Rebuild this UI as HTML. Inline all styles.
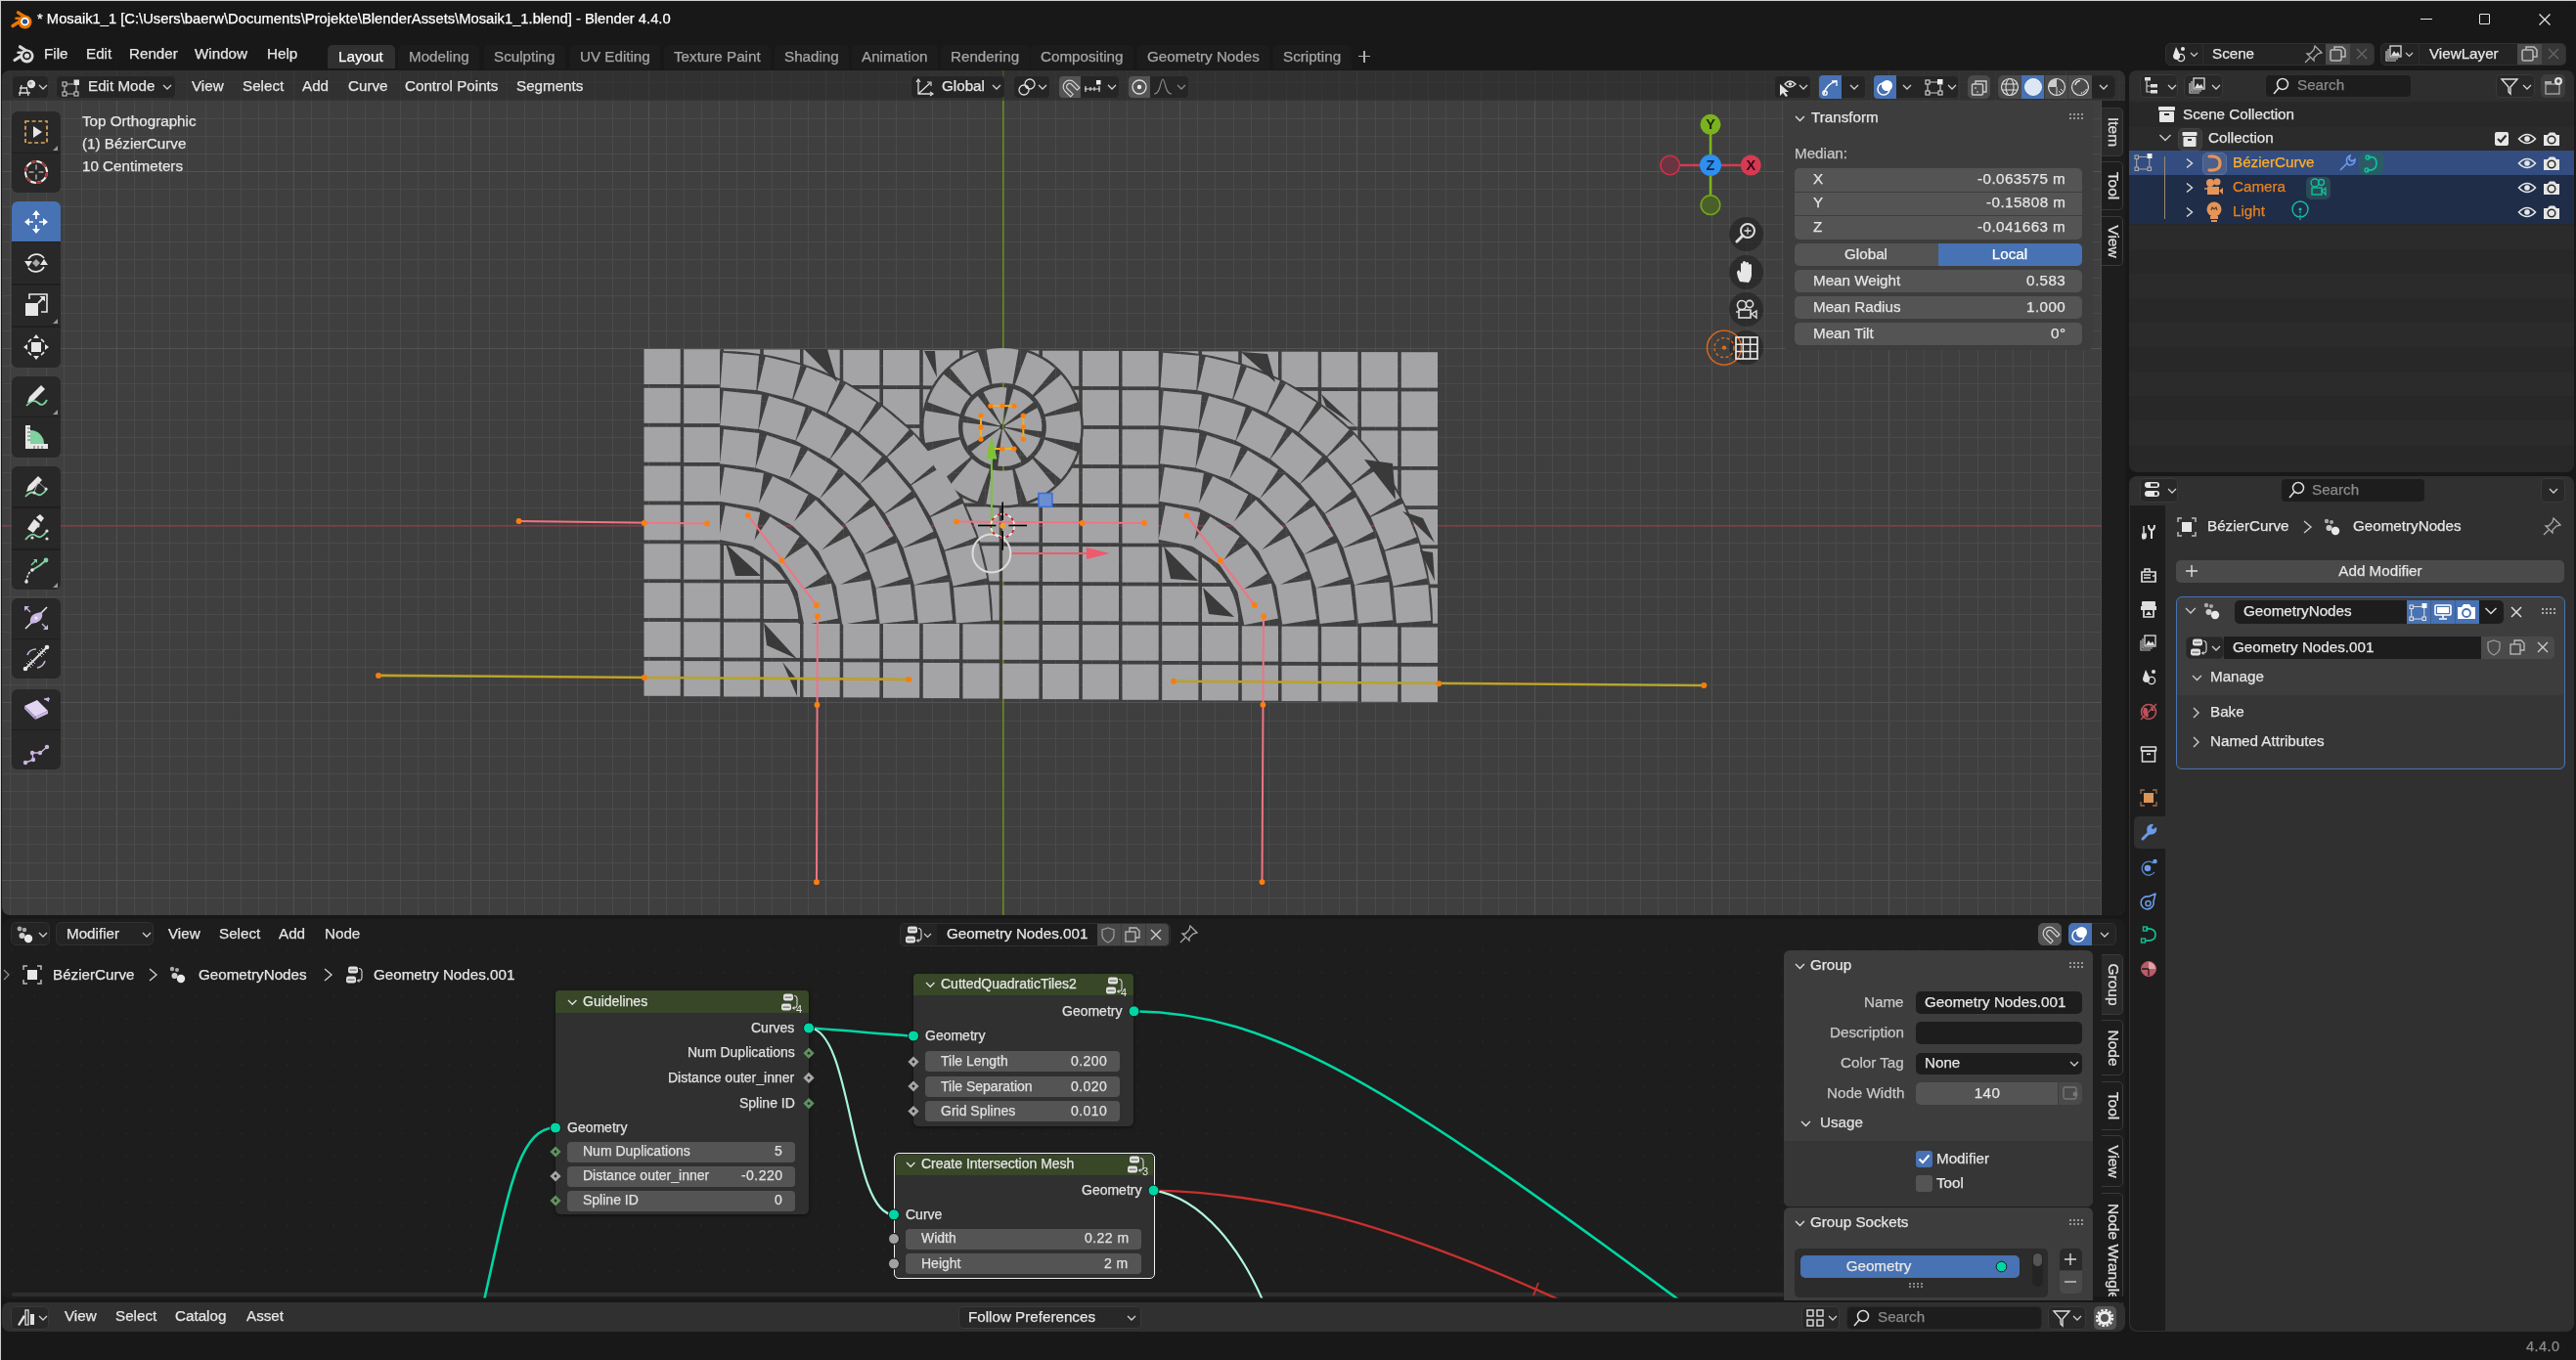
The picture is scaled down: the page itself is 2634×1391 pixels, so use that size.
<!DOCTYPE html><html><head><meta charset="utf-8"><style>
html,body{margin:0;padding:0}
body{width:2634px;height:1391px;overflow:hidden;position:relative;background:#181818;font-family:"Liberation Sans",sans-serif}
.a{position:absolute}
.t{position:absolute;white-space:nowrap;line-height:22px;height:22px;will-change:transform;-webkit-text-stroke:0.25px currentColor}
svg{overflow:visible}
</style></head><body>
<div class="a" style="left:0px;top:0px;width:2634px;height:1px;background:#cfcfcf;"></div>
<div class="a" style="left:0px;top:0px;width:1px;height:1391px;background:#cfcfcf;"></div>
<div class="a" style="left:1px;top:1px;width:2633px;height:1390px;background:#181818;border-radius:8px 8px 8px 8px;"></div>
<svg class="a" style="left:10px;top:10px;" width="24" height="20" viewBox="0 0 24 20"><g stroke="#ea7600" stroke-linecap="round" fill="none"><path d="M15 7 L8.5 2.8" stroke-width="3.3"/><path d="M10 12 L3 16.5" stroke-width="3.3"/><path d="M11 8.8 L6.5 8.8" stroke-width="2.6"/></g><circle cx="15.5" cy="12.5" r="7" fill="#ea7600"/><circle cx="15.5" cy="12" r="4.3" fill="#fff"/><circle cx="15.5" cy="12" r="2.6" fill="#265787"/></svg>
<div class="t" style="top:7.7px;font-size:14.76px;color:#ffffff;left:38px;">* Mosaik1_1 [C:\Users\baerw\Documents\Projekte\BlenderAssets\Mosaik1_1.blend] - Blender 4.4.0</div>
<div class="a" style="left:2475px;top:19px;width:12px;height:1px;background:#e8e8e8;"></div>
<div class="a" style="left:2535px;top:14px;width:11px;height:11px;border-radius:1px;border:1.2px solid #e8e8e8;box-sizing:border-box;"></div>
<svg class="a" style="left:2596px;top:14px;" width="12" height="12" viewBox="0 0 12 12"><path d="M0.5 0.5 L11.5 11.5 M11.5 0.5 L0.5 11.5" stroke="#e8e8e8" stroke-width="1.2"/></svg>
<svg class="a" style="left:12px;top:45px;" width="24" height="20" viewBox="0 0 24 20"><g stroke="#d9d9d9" stroke-linecap="round" fill="none"><path d="M15 7 L8.5 2.8" stroke-width="3.2"/><path d="M10 12 L3 16.5" stroke-width="3.2"/><path d="M11 8.8 L6.5 8.8" stroke-width="2.5"/></g><circle cx="15.5" cy="12.5" r="7" fill="#d9d9d9"/><circle cx="15.5" cy="12" r="4.3" fill="#181818"/><circle cx="15.5" cy="12" r="2.6" fill="#d9d9d9"/></svg>
<div class="t" style="top:43.7px;font-size:15.2px;color:#e6e6e6;left:45px;">File</div>
<div class="t" style="top:43.7px;font-size:15.2px;color:#e6e6e6;left:87.5px;">Edit</div>
<div class="t" style="top:43.7px;font-size:15.2px;color:#e6e6e6;left:132px;">Render</div>
<div class="t" style="top:43.7px;font-size:15.2px;color:#e6e6e6;left:199px;">Window</div>
<div class="t" style="top:43.7px;font-size:15.2px;color:#e6e6e6;left:273px;">Help</div>
<div class="a" style="left:335px;top:46px;width:69px;height:24px;background:#303030;border-radius:5px 5px 0 0;"></div>
<div class="a" style="left:407.0px;top:45.5px;width:82.68666666666667px;height:25px;background:#1c1c1c;border-radius:5px 5px 0 0;"></div>
<div class="a" style="left:494.5px;top:45.5px;width:83.52583333333334px;height:25px;background:#1c1c1c;border-radius:5px 5px 0 0;"></div>
<div class="a" style="left:582.5px;top:45.5px;width:92.80416666666666px;height:25px;background:#1c1c1c;border-radius:5px 5px 0 0;"></div>
<div class="a" style="left:678.5px;top:45.5px;width:109.73px;height:25px;background:#1c1c1c;border-radius:5px 5px 0 0;"></div>
<div class="a" style="left:791.5px;top:45.5px;width:76.78083333333333px;height:25px;background:#1c1c1c;border-radius:5px 5px 0 0;"></div>
<div class="a" style="left:870.5px;top:45.5px;width:88.5925px;height:25px;background:#1c1c1c;border-radius:5px 5px 0 0;"></div>
<div class="a" style="left:961.5px;top:45.5px;width:91.14166666666667px;height:25px;background:#1c1c1c;border-radius:5px 5px 0 0;"></div>
<div class="a" style="left:1053.5px;top:45.5px;width:105.48666666666666px;height:25px;background:#1c1c1c;border-radius:5px 5px 0 0;"></div>
<div class="a" style="left:1162.5px;top:45.5px;width:135.91833333333332px;height:25px;background:#1c1c1c;border-radius:5px 5px 0 0;"></div>
<div class="a" style="left:1301.5px;top:45.5px;width:80.1375px;height:25px;background:#1c1c1c;border-radius:5px 5px 0 0;"></div>
<div class="t" style="top:47.2px;font-size:15.2px;color:#ffffff;left:346px;">Layout</div>
<div class="t" style="top:47.2px;font-size:15.2px;color:#a6a6a6;left:417.5px;">Modeling</div>
<div class="t" style="top:47.2px;font-size:15.2px;color:#a6a6a6;left:505px;">Sculpting</div>
<div class="t" style="top:47.2px;font-size:15.2px;color:#a6a6a6;left:593px;">UV Editing</div>
<div class="t" style="top:47.2px;font-size:15.2px;color:#a6a6a6;left:689px;">Texture Paint</div>
<div class="t" style="top:47.2px;font-size:15.2px;color:#a6a6a6;left:802px;">Shading</div>
<div class="t" style="top:47.2px;font-size:15.2px;color:#a6a6a6;left:881px;">Animation</div>
<div class="t" style="top:47.2px;font-size:15.2px;color:#a6a6a6;left:972px;">Rendering</div>
<div class="t" style="top:47.2px;font-size:15.2px;color:#a6a6a6;left:1064px;">Compositing</div>
<div class="t" style="top:47.2px;font-size:15.2px;color:#a6a6a6;left:1173px;">Geometry Nodes</div>
<div class="t" style="top:47.2px;font-size:15.2px;color:#a6a6a6;left:1312px;">Scripting</div>
<div class="a" style="left:1389px;top:57px;width:12px;height:1.3px;background:#b0b0b0;"></div>
<div class="a" style="left:1394.4px;top:51.5px;width:1.3px;height:12px;background:#b0b0b0;"></div>
<div class="t" style="top:1365.7px;font-size:14.5px;color:#8c8c8c;right:17px;letter-spacing:0.45px;">4.4.0</div>
<div class="a" style="left:2px;top:72px;width:2171px;height:864px;background:#3f3f3f;border-radius:8px;overflow:hidden">
<svg class="a" style="left:0;top:0" width="2171" height="864"><rect x="8" y="0" width="1" height="864" fill="#4a4a4a"/><rect x="26" y="0" width="1" height="864" fill="#4a4a4a"/><rect x="45" y="0" width="1" height="864" fill="#4a4a4a"/><rect x="63" y="0" width="1" height="864" fill="#4a4a4a"/><rect x="81" y="0" width="1" height="864" fill="#4a4a4a"/><rect x="99" y="0" width="1" height="864" fill="#4a4a4a"/><rect x="117" y="0" width="1" height="864" fill="#525252"/><rect x="135" y="0" width="1" height="864" fill="#4a4a4a"/><rect x="153" y="0" width="1" height="864" fill="#4a4a4a"/><rect x="171" y="0" width="1" height="864" fill="#4a4a4a"/><rect x="189" y="0" width="1" height="864" fill="#4a4a4a"/><rect x="208" y="0" width="1" height="864" fill="#4a4a4a"/><rect x="226" y="0" width="1" height="864" fill="#4a4a4a"/><rect x="244" y="0" width="1" height="864" fill="#4a4a4a"/><rect x="262" y="0" width="1" height="864" fill="#4a4a4a"/><rect x="280" y="0" width="1" height="864" fill="#4a4a4a"/><rect x="298" y="0" width="1" height="864" fill="#525252"/><rect x="316" y="0" width="1" height="864" fill="#4a4a4a"/><rect x="334" y="0" width="1" height="864" fill="#4a4a4a"/><rect x="353" y="0" width="1" height="864" fill="#4a4a4a"/><rect x="371" y="0" width="1" height="864" fill="#4a4a4a"/><rect x="389" y="0" width="1" height="864" fill="#4a4a4a"/><rect x="407" y="0" width="1" height="864" fill="#4a4a4a"/><rect x="425" y="0" width="1" height="864" fill="#4a4a4a"/><rect x="443" y="0" width="1" height="864" fill="#4a4a4a"/><rect x="461" y="0" width="1" height="864" fill="#4a4a4a"/><rect x="479" y="0" width="1" height="864" fill="#525252"/><rect x="498" y="0" width="1" height="864" fill="#4a4a4a"/><rect x="516" y="0" width="1" height="864" fill="#4a4a4a"/><rect x="534" y="0" width="1" height="864" fill="#4a4a4a"/><rect x="552" y="0" width="1" height="864" fill="#4a4a4a"/><rect x="570" y="0" width="1" height="864" fill="#4a4a4a"/><rect x="588" y="0" width="1" height="864" fill="#4a4a4a"/><rect x="606" y="0" width="1" height="864" fill="#4a4a4a"/><rect x="624" y="0" width="1" height="864" fill="#4a4a4a"/><rect x="642" y="0" width="1" height="864" fill="#4a4a4a"/><rect x="661" y="0" width="1" height="864" fill="#525252"/><rect x="679" y="0" width="1" height="864" fill="#4a4a4a"/><rect x="697" y="0" width="1" height="864" fill="#4a4a4a"/><rect x="715" y="0" width="1" height="864" fill="#4a4a4a"/><rect x="733" y="0" width="1" height="864" fill="#4a4a4a"/><rect x="751" y="0" width="1" height="864" fill="#4a4a4a"/><rect x="769" y="0" width="1" height="864" fill="#4a4a4a"/><rect x="787" y="0" width="1" height="864" fill="#4a4a4a"/><rect x="806" y="0" width="1" height="864" fill="#4a4a4a"/><rect x="824" y="0" width="1" height="864" fill="#4a4a4a"/><rect x="842" y="0" width="1" height="864" fill="#525252"/><rect x="860" y="0" width="1" height="864" fill="#4a4a4a"/><rect x="878" y="0" width="1" height="864" fill="#4a4a4a"/><rect x="896" y="0" width="1" height="864" fill="#4a4a4a"/><rect x="914" y="0" width="1" height="864" fill="#4a4a4a"/><rect x="932" y="0" width="1" height="864" fill="#4a4a4a"/><rect x="951" y="0" width="1" height="864" fill="#4a4a4a"/><rect x="969" y="0" width="1" height="864" fill="#4a4a4a"/><rect x="987" y="0" width="1" height="864" fill="#4a4a4a"/><rect x="1005" y="0" width="1" height="864" fill="#4a4a4a"/><rect x="1023" y="0" width="1" height="864" fill="#525252"/><rect x="1041" y="0" width="1" height="864" fill="#4a4a4a"/><rect x="1059" y="0" width="1" height="864" fill="#4a4a4a"/><rect x="1077" y="0" width="1" height="864" fill="#4a4a4a"/><rect x="1095" y="0" width="1" height="864" fill="#4a4a4a"/><rect x="1114" y="0" width="1" height="864" fill="#4a4a4a"/><rect x="1132" y="0" width="1" height="864" fill="#4a4a4a"/><rect x="1150" y="0" width="1" height="864" fill="#4a4a4a"/><rect x="1168" y="0" width="1" height="864" fill="#4a4a4a"/><rect x="1186" y="0" width="1" height="864" fill="#4a4a4a"/><rect x="1204" y="0" width="1" height="864" fill="#525252"/><rect x="1222" y="0" width="1" height="864" fill="#4a4a4a"/><rect x="1240" y="0" width="1" height="864" fill="#4a4a4a"/><rect x="1259" y="0" width="1" height="864" fill="#4a4a4a"/><rect x="1277" y="0" width="1" height="864" fill="#4a4a4a"/><rect x="1295" y="0" width="1" height="864" fill="#4a4a4a"/><rect x="1313" y="0" width="1" height="864" fill="#4a4a4a"/><rect x="1331" y="0" width="1" height="864" fill="#4a4a4a"/><rect x="1349" y="0" width="1" height="864" fill="#4a4a4a"/><rect x="1367" y="0" width="1" height="864" fill="#4a4a4a"/><rect x="1385" y="0" width="1" height="864" fill="#525252"/><rect x="1404" y="0" width="1" height="864" fill="#4a4a4a"/><rect x="1422" y="0" width="1" height="864" fill="#4a4a4a"/><rect x="1440" y="0" width="1" height="864" fill="#4a4a4a"/><rect x="1458" y="0" width="1" height="864" fill="#4a4a4a"/><rect x="1476" y="0" width="1" height="864" fill="#4a4a4a"/><rect x="1494" y="0" width="1" height="864" fill="#4a4a4a"/><rect x="1512" y="0" width="1" height="864" fill="#4a4a4a"/><rect x="1530" y="0" width="1" height="864" fill="#4a4a4a"/><rect x="1548" y="0" width="1" height="864" fill="#4a4a4a"/><rect x="1567" y="0" width="1" height="864" fill="#525252"/><rect x="1585" y="0" width="1" height="864" fill="#4a4a4a"/><rect x="1603" y="0" width="1" height="864" fill="#4a4a4a"/><rect x="1621" y="0" width="1" height="864" fill="#4a4a4a"/><rect x="1639" y="0" width="1" height="864" fill="#4a4a4a"/><rect x="1657" y="0" width="1" height="864" fill="#4a4a4a"/><rect x="1675" y="0" width="1" height="864" fill="#4a4a4a"/><rect x="1693" y="0" width="1" height="864" fill="#4a4a4a"/><rect x="1712" y="0" width="1" height="864" fill="#4a4a4a"/><rect x="1730" y="0" width="1" height="864" fill="#4a4a4a"/><rect x="1748" y="0" width="1" height="864" fill="#525252"/><rect x="1766" y="0" width="1" height="864" fill="#4a4a4a"/><rect x="1784" y="0" width="1" height="864" fill="#4a4a4a"/><rect x="1802" y="0" width="1" height="864" fill="#4a4a4a"/><rect x="1820" y="0" width="1" height="864" fill="#4a4a4a"/><rect x="1838" y="0" width="1" height="864" fill="#4a4a4a"/><rect x="1857" y="0" width="1" height="864" fill="#4a4a4a"/><rect x="1875" y="0" width="1" height="864" fill="#4a4a4a"/><rect x="1893" y="0" width="1" height="864" fill="#4a4a4a"/><rect x="1911" y="0" width="1" height="864" fill="#4a4a4a"/><rect x="1929" y="0" width="1" height="864" fill="#525252"/><rect x="1947" y="0" width="1" height="864" fill="#4a4a4a"/><rect x="1965" y="0" width="1" height="864" fill="#4a4a4a"/><rect x="1983" y="0" width="1" height="864" fill="#4a4a4a"/><rect x="2001" y="0" width="1" height="864" fill="#4a4a4a"/><rect x="2020" y="0" width="1" height="864" fill="#4a4a4a"/><rect x="2038" y="0" width="1" height="864" fill="#4a4a4a"/><rect x="2056" y="0" width="1" height="864" fill="#4a4a4a"/><rect x="2074" y="0" width="1" height="864" fill="#4a4a4a"/><rect x="2092" y="0" width="1" height="864" fill="#4a4a4a"/><rect x="2110" y="0" width="1" height="864" fill="#525252"/><rect x="2128" y="0" width="1" height="864" fill="#4a4a4a"/><rect x="2146" y="0" width="1" height="864" fill="#4a4a4a"/><rect x="2165" y="0" width="1" height="864" fill="#4a4a4a"/><rect x="0" y="12" width="2171" height="1" fill="#4a4a4a"/><rect x="0" y="30" width="2171" height="1" fill="#4a4a4a"/><rect x="0" y="49" width="2171" height="1" fill="#4a4a4a"/><rect x="0" y="67" width="2171" height="1" fill="#4a4a4a"/><rect x="0" y="85" width="2171" height="1" fill="#4a4a4a"/><rect x="0" y="103" width="2171" height="1" fill="#525252"/><rect x="0" y="121" width="2171" height="1" fill="#4a4a4a"/><rect x="0" y="139" width="2171" height="1" fill="#4a4a4a"/><rect x="0" y="157" width="2171" height="1" fill="#4a4a4a"/><rect x="0" y="175" width="2171" height="1" fill="#4a4a4a"/><rect x="0" y="193" width="2171" height="1" fill="#4a4a4a"/><rect x="0" y="212" width="2171" height="1" fill="#4a4a4a"/><rect x="0" y="230" width="2171" height="1" fill="#4a4a4a"/><rect x="0" y="248" width="2171" height="1" fill="#4a4a4a"/><rect x="0" y="266" width="2171" height="1" fill="#4a4a4a"/><rect x="0" y="284" width="2171" height="1" fill="#525252"/><rect x="0" y="302" width="2171" height="1" fill="#4a4a4a"/><rect x="0" y="320" width="2171" height="1" fill="#4a4a4a"/><rect x="0" y="338" width="2171" height="1" fill="#4a4a4a"/><rect x="0" y="357" width="2171" height="1" fill="#4a4a4a"/><rect x="0" y="375" width="2171" height="1" fill="#4a4a4a"/><rect x="0" y="393" width="2171" height="1" fill="#4a4a4a"/><rect x="0" y="411" width="2171" height="1" fill="#4a4a4a"/><rect x="0" y="429" width="2171" height="1" fill="#4a4a4a"/><rect x="0" y="447" width="2171" height="1" fill="#4a4a4a"/><rect x="0" y="465" width="2171" height="1" fill="#525252"/><rect x="0" y="483" width="2171" height="1" fill="#4a4a4a"/><rect x="0" y="502" width="2171" height="1" fill="#4a4a4a"/><rect x="0" y="520" width="2171" height="1" fill="#4a4a4a"/><rect x="0" y="538" width="2171" height="1" fill="#4a4a4a"/><rect x="0" y="556" width="2171" height="1" fill="#4a4a4a"/><rect x="0" y="574" width="2171" height="1" fill="#4a4a4a"/><rect x="0" y="592" width="2171" height="1" fill="#4a4a4a"/><rect x="0" y="610" width="2171" height="1" fill="#4a4a4a"/><rect x="0" y="628" width="2171" height="1" fill="#4a4a4a"/><rect x="0" y="646" width="2171" height="1" fill="#525252"/><rect x="0" y="665" width="2171" height="1" fill="#4a4a4a"/><rect x="0" y="683" width="2171" height="1" fill="#4a4a4a"/><rect x="0" y="701" width="2171" height="1" fill="#4a4a4a"/><rect x="0" y="719" width="2171" height="1" fill="#4a4a4a"/><rect x="0" y="737" width="2171" height="1" fill="#4a4a4a"/><rect x="0" y="755" width="2171" height="1" fill="#4a4a4a"/><rect x="0" y="773" width="2171" height="1" fill="#4a4a4a"/><rect x="0" y="791" width="2171" height="1" fill="#4a4a4a"/><rect x="0" y="810" width="2171" height="1" fill="#4a4a4a"/><rect x="0" y="828" width="2171" height="1" fill="#525252"/><rect x="0" y="846" width="2171" height="1" fill="#4a4a4a"/><rect x="0" y="465" width="2171" height="1.6" fill="#8a3a48"/><rect x="1023" y="0" width="1.6" height="864" fill="#6b8a1f"/></svg>
</div>
<svg class="a" style="left:600px;top:330px;" width="950" height="420" viewBox="0 0 950 420"><defs><mask id="mm"><rect x="0" y="0" width="950" height="420" fill="white"/><path d="M136 29 A279 279 0 0 1 415 308 L216.5 308 A80.5 80.5 0 0 0 136 227.5 Z" fill="black"/><path d="M586 29 A279 279 0 0 1 865 308 L666.5 308 A80.5 80.5 0 0 0 586 227.5 Z" fill="black"/><circle cx="424.9000000000001" cy="106.60000000000002" r="83" fill="black"/></mask></defs><g mask="url(#mm)"><rect x="58.5" y="27.0" width="37.2" height="36.0" fill="#a4a4a6"/><rect x="99.2" y="27.2" width="37.2" height="36.1" fill="#a4a4a6"/><rect x="140.0" y="27.3" width="37.2" height="36.1" fill="#a4a4a6"/><rect x="180.8" y="27.5" width="37.2" height="36.1" fill="#a4a4a6"/><rect x="221.5" y="27.7" width="37.2" height="36.1" fill="#a4a4a6"/><rect x="262.2" y="27.9" width="37.2" height="36.1" fill="#a4a4a6"/><rect x="303.0" y="28.0" width="37.2" height="36.2" fill="#a4a4a6"/><rect x="343.8" y="28.2" width="37.2" height="36.2" fill="#a4a4a6"/><rect x="384.5" y="28.4" width="37.2" height="36.2" fill="#a4a4a6"/><rect x="425.2" y="28.5" width="37.2" height="36.2" fill="#a4a4a6"/><rect x="466.0" y="28.7" width="37.2" height="36.2" fill="#a4a4a6"/><rect x="506.8" y="28.9" width="37.2" height="36.2" fill="#a4a4a6"/><rect x="547.5" y="29.0" width="37.2" height="36.3" fill="#a4a4a6"/><rect x="588.2" y="29.2" width="37.2" height="36.3" fill="#a4a4a6"/><rect x="629.0" y="29.4" width="37.2" height="36.3" fill="#a4a4a6"/><rect x="669.8" y="29.6" width="37.2" height="36.3" fill="#a4a4a6"/><rect x="710.5" y="29.7" width="37.2" height="36.3" fill="#a4a4a6"/><rect x="751.2" y="29.9" width="37.2" height="36.3" fill="#a4a4a6"/><rect x="792.0" y="30.1" width="37.2" height="36.4" fill="#a4a4a6"/><rect x="832.8" y="30.2" width="37.2" height="36.4" fill="#a4a4a6"/><rect x="58.5" y="66.8" width="37.2" height="36.0" fill="#a4a4a6"/><rect x="99.2" y="67.0" width="37.2" height="36.1" fill="#a4a4a6"/><rect x="140.0" y="67.2" width="37.2" height="36.1" fill="#a4a4a6"/><rect x="180.8" y="67.4" width="37.2" height="36.1" fill="#a4a4a6"/><rect x="221.5" y="67.6" width="37.2" height="36.1" fill="#a4a4a6"/><rect x="262.2" y="67.8" width="37.2" height="36.1" fill="#a4a4a6"/><rect x="303.0" y="68.0" width="37.2" height="36.2" fill="#a4a4a6"/><rect x="343.8" y="68.2" width="37.2" height="36.2" fill="#a4a4a6"/><rect x="384.5" y="68.3" width="37.2" height="36.2" fill="#a4a4a6"/><rect x="425.2" y="68.5" width="37.2" height="36.2" fill="#a4a4a6"/><rect x="466.0" y="68.7" width="37.2" height="36.2" fill="#a4a4a6"/><rect x="506.8" y="68.9" width="37.2" height="36.2" fill="#a4a4a6"/><rect x="547.5" y="69.1" width="37.2" height="36.3" fill="#a4a4a6"/><rect x="588.2" y="69.3" width="37.2" height="36.3" fill="#a4a4a6"/><rect x="629.0" y="69.5" width="37.2" height="36.3" fill="#a4a4a6"/><rect x="669.8" y="69.7" width="37.2" height="36.3" fill="#a4a4a6"/><rect x="710.5" y="69.8" width="37.2" height="36.3" fill="#a4a4a6"/><rect x="751.2" y="70.0" width="37.2" height="36.3" fill="#a4a4a6"/><rect x="792.0" y="70.2" width="37.2" height="36.4" fill="#a4a4a6"/><rect x="832.8" y="70.4" width="37.2" height="36.4" fill="#a4a4a6"/><rect x="58.5" y="106.7" width="37.2" height="36.0" fill="#a4a4a6"/><rect x="99.2" y="106.9" width="37.2" height="36.1" fill="#a4a4a6"/><rect x="140.0" y="107.1" width="37.2" height="36.1" fill="#a4a4a6"/><rect x="180.8" y="107.3" width="37.2" height="36.1" fill="#a4a4a6"/><rect x="221.5" y="107.5" width="37.2" height="36.1" fill="#a4a4a6"/><rect x="262.2" y="107.7" width="37.2" height="36.1" fill="#a4a4a6"/><rect x="303.0" y="107.9" width="37.2" height="36.2" fill="#a4a4a6"/><rect x="343.8" y="108.1" width="37.2" height="36.2" fill="#a4a4a6"/><rect x="384.5" y="108.3" width="37.2" height="36.2" fill="#a4a4a6"/><rect x="425.2" y="108.5" width="37.2" height="36.2" fill="#a4a4a6"/><rect x="466.0" y="108.7" width="37.2" height="36.2" fill="#a4a4a6"/><rect x="506.8" y="108.9" width="37.2" height="36.2" fill="#a4a4a6"/><rect x="547.5" y="109.2" width="37.2" height="36.3" fill="#a4a4a6"/><rect x="588.2" y="109.4" width="37.2" height="36.3" fill="#a4a4a6"/><rect x="629.0" y="109.6" width="37.2" height="36.3" fill="#a4a4a6"/><rect x="669.8" y="109.8" width="37.2" height="36.3" fill="#a4a4a6"/><rect x="710.5" y="110.0" width="37.2" height="36.3" fill="#a4a4a6"/><rect x="751.2" y="110.2" width="37.2" height="36.3" fill="#a4a4a6"/><rect x="792.0" y="110.4" width="37.2" height="36.4" fill="#a4a4a6"/><rect x="832.8" y="110.6" width="37.2" height="36.4" fill="#a4a4a6"/><rect x="58.5" y="146.5" width="37.2" height="36.0" fill="#a4a4a6"/><rect x="99.2" y="146.8" width="37.2" height="36.1" fill="#a4a4a6"/><rect x="140.0" y="147.0" width="37.2" height="36.1" fill="#a4a4a6"/><rect x="180.8" y="147.2" width="37.2" height="36.1" fill="#a4a4a6"/><rect x="221.5" y="147.4" width="37.2" height="36.1" fill="#a4a4a6"/><rect x="262.2" y="147.6" width="37.2" height="36.1" fill="#a4a4a6"/><rect x="303.0" y="147.9" width="37.2" height="36.2" fill="#a4a4a6"/><rect x="343.8" y="148.1" width="37.2" height="36.2" fill="#a4a4a6"/><rect x="384.5" y="148.3" width="37.2" height="36.2" fill="#a4a4a6"/><rect x="425.2" y="148.5" width="37.2" height="36.2" fill="#a4a4a6"/><rect x="466.0" y="148.8" width="37.2" height="36.2" fill="#a4a4a6"/><rect x="506.8" y="149.0" width="37.2" height="36.2" fill="#a4a4a6"/><rect x="547.5" y="149.2" width="37.2" height="36.3" fill="#a4a4a6"/><rect x="588.2" y="149.4" width="37.2" height="36.3" fill="#a4a4a6"/><rect x="629.0" y="149.7" width="37.2" height="36.3" fill="#a4a4a6"/><rect x="669.8" y="149.9" width="37.2" height="36.3" fill="#a4a4a6"/><rect x="710.5" y="150.1" width="37.2" height="36.3" fill="#a4a4a6"/><rect x="751.2" y="150.3" width="37.2" height="36.3" fill="#a4a4a6"/><rect x="792.0" y="150.6" width="37.2" height="36.4" fill="#a4a4a6"/><rect x="832.8" y="150.8" width="37.2" height="36.4" fill="#a4a4a6"/><rect x="58.5" y="186.4" width="37.2" height="36.0" fill="#a4a4a6"/><rect x="99.2" y="186.6" width="37.2" height="36.1" fill="#a4a4a6"/><rect x="140.0" y="186.9" width="37.2" height="36.1" fill="#a4a4a6"/><rect x="180.8" y="187.1" width="37.2" height="36.1" fill="#a4a4a6"/><rect x="221.5" y="187.3" width="37.2" height="36.1" fill="#a4a4a6"/><rect x="262.2" y="187.6" width="37.2" height="36.1" fill="#a4a4a6"/><rect x="303.0" y="187.8" width="37.2" height="36.2" fill="#a4a4a6"/><rect x="343.8" y="188.1" width="37.2" height="36.2" fill="#a4a4a6"/><rect x="384.5" y="188.3" width="37.2" height="36.2" fill="#a4a4a6"/><rect x="425.2" y="188.5" width="37.2" height="36.2" fill="#a4a4a6"/><rect x="466.0" y="188.8" width="37.2" height="36.2" fill="#a4a4a6"/><rect x="506.8" y="189.0" width="37.2" height="36.2" fill="#a4a4a6"/><rect x="547.5" y="189.3" width="37.2" height="36.3" fill="#a4a4a6"/><rect x="588.2" y="189.5" width="37.2" height="36.3" fill="#a4a4a6"/><rect x="629.0" y="189.8" width="37.2" height="36.3" fill="#a4a4a6"/><rect x="669.8" y="190.0" width="37.2" height="36.3" fill="#a4a4a6"/><rect x="710.5" y="190.2" width="37.2" height="36.3" fill="#a4a4a6"/><rect x="751.2" y="190.5" width="37.2" height="36.3" fill="#a4a4a6"/><rect x="792.0" y="190.7" width="37.2" height="36.4" fill="#a4a4a6"/><rect x="832.8" y="191.0" width="37.2" height="36.4" fill="#a4a4a6"/><rect x="58.5" y="226.2" width="37.2" height="36.0" fill="#a4a4a6"/><rect x="99.2" y="226.5" width="37.2" height="36.1" fill="#a4a4a6"/><rect x="140.0" y="226.7" width="37.2" height="36.1" fill="#a4a4a6"/><rect x="180.8" y="227.0" width="37.2" height="36.1" fill="#a4a4a6"/><rect x="221.5" y="227.3" width="37.2" height="36.1" fill="#a4a4a6"/><rect x="262.2" y="227.5" width="37.2" height="36.1" fill="#a4a4a6"/><rect x="303.0" y="227.8" width="37.2" height="36.2" fill="#a4a4a6"/><rect x="343.8" y="228.0" width="37.2" height="36.2" fill="#a4a4a6"/><rect x="384.5" y="228.3" width="37.2" height="36.2" fill="#a4a4a6"/><rect x="425.2" y="228.6" width="37.2" height="36.2" fill="#a4a4a6"/><rect x="466.0" y="228.8" width="37.2" height="36.2" fill="#a4a4a6"/><rect x="506.8" y="229.1" width="37.2" height="36.2" fill="#a4a4a6"/><rect x="547.5" y="229.3" width="37.2" height="36.3" fill="#a4a4a6"/><rect x="588.2" y="229.6" width="37.2" height="36.3" fill="#a4a4a6"/><rect x="629.0" y="229.8" width="37.2" height="36.3" fill="#a4a4a6"/><rect x="669.8" y="230.1" width="37.2" height="36.3" fill="#a4a4a6"/><rect x="710.5" y="230.4" width="37.2" height="36.3" fill="#a4a4a6"/><rect x="751.2" y="230.6" width="37.2" height="36.3" fill="#a4a4a6"/><rect x="792.0" y="230.9" width="37.2" height="36.4" fill="#a4a4a6"/><rect x="832.8" y="231.1" width="37.2" height="36.4" fill="#a4a4a6"/><rect x="58.5" y="266.1" width="37.2" height="36.0" fill="#a4a4a6"/><rect x="99.2" y="266.3" width="37.2" height="36.1" fill="#a4a4a6"/><rect x="140.0" y="266.6" width="37.2" height="36.1" fill="#a4a4a6"/><rect x="180.8" y="266.9" width="37.2" height="36.1" fill="#a4a4a6"/><rect x="221.5" y="267.2" width="37.2" height="36.1" fill="#a4a4a6"/><rect x="262.2" y="267.4" width="37.2" height="36.1" fill="#a4a4a6"/><rect x="303.0" y="267.7" width="37.2" height="36.2" fill="#a4a4a6"/><rect x="343.8" y="268.0" width="37.2" height="36.2" fill="#a4a4a6"/><rect x="384.5" y="268.3" width="37.2" height="36.2" fill="#a4a4a6"/><rect x="425.2" y="268.6" width="37.2" height="36.2" fill="#a4a4a6"/><rect x="466.0" y="268.8" width="37.2" height="36.2" fill="#a4a4a6"/><rect x="506.8" y="269.1" width="37.2" height="36.2" fill="#a4a4a6"/><rect x="547.5" y="269.4" width="37.2" height="36.3" fill="#a4a4a6"/><rect x="588.2" y="269.7" width="37.2" height="36.3" fill="#a4a4a6"/><rect x="629.0" y="269.9" width="37.2" height="36.3" fill="#a4a4a6"/><rect x="669.8" y="270.2" width="37.2" height="36.3" fill="#a4a4a6"/><rect x="710.5" y="270.5" width="37.2" height="36.3" fill="#a4a4a6"/><rect x="751.2" y="270.8" width="37.2" height="36.3" fill="#a4a4a6"/><rect x="792.0" y="271.0" width="37.2" height="36.4" fill="#a4a4a6"/><rect x="832.8" y="271.3" width="37.2" height="36.4" fill="#a4a4a6"/><rect x="58.5" y="305.9" width="37.2" height="36.0" fill="#a4a4a6"/><rect x="99.2" y="306.2" width="37.2" height="36.1" fill="#a4a4a6"/><rect x="140.0" y="306.5" width="37.2" height="36.1" fill="#a4a4a6"/><rect x="180.8" y="306.8" width="37.2" height="36.1" fill="#a4a4a6"/><rect x="221.5" y="307.1" width="37.2" height="36.1" fill="#a4a4a6"/><rect x="262.2" y="307.4" width="37.2" height="36.1" fill="#a4a4a6"/><rect x="303.0" y="307.7" width="37.2" height="36.2" fill="#a4a4a6"/><rect x="343.8" y="308.0" width="37.2" height="36.2" fill="#a4a4a6"/><rect x="384.5" y="308.3" width="37.2" height="36.2" fill="#a4a4a6"/><rect x="425.2" y="308.6" width="37.2" height="36.2" fill="#a4a4a6"/><rect x="466.0" y="308.9" width="37.2" height="36.2" fill="#a4a4a6"/><rect x="506.8" y="309.1" width="37.2" height="36.2" fill="#a4a4a6"/><rect x="547.5" y="309.4" width="37.2" height="36.3" fill="#a4a4a6"/><rect x="588.2" y="309.7" width="37.2" height="36.3" fill="#a4a4a6"/><rect x="629.0" y="310.0" width="37.2" height="36.3" fill="#a4a4a6"/><rect x="669.8" y="310.3" width="37.2" height="36.3" fill="#a4a4a6"/><rect x="710.5" y="310.6" width="37.2" height="36.3" fill="#a4a4a6"/><rect x="751.2" y="310.9" width="37.2" height="36.3" fill="#a4a4a6"/><rect x="792.0" y="311.2" width="37.2" height="36.4" fill="#a4a4a6"/><rect x="832.8" y="311.5" width="37.2" height="36.4" fill="#a4a4a6"/><rect x="58.5" y="345.8" width="37.2" height="36.0" fill="#a4a4a6"/><rect x="99.2" y="346.1" width="37.2" height="36.1" fill="#a4a4a6"/><rect x="140.0" y="346.4" width="37.2" height="36.1" fill="#a4a4a6"/><rect x="180.8" y="346.7" width="37.2" height="36.1" fill="#a4a4a6"/><rect x="221.5" y="347.0" width="37.2" height="36.1" fill="#a4a4a6"/><rect x="262.2" y="347.3" width="37.2" height="36.1" fill="#a4a4a6"/><rect x="303.0" y="347.6" width="37.2" height="36.2" fill="#a4a4a6"/><rect x="343.8" y="347.9" width="37.2" height="36.2" fill="#a4a4a6"/><rect x="384.5" y="348.3" width="37.2" height="36.2" fill="#a4a4a6"/><rect x="425.2" y="348.6" width="37.2" height="36.2" fill="#a4a4a6"/><rect x="466.0" y="348.9" width="37.2" height="36.2" fill="#a4a4a6"/><rect x="506.8" y="349.2" width="37.2" height="36.2" fill="#a4a4a6"/><rect x="547.5" y="349.5" width="37.2" height="36.3" fill="#a4a4a6"/><rect x="588.2" y="349.8" width="37.2" height="36.3" fill="#a4a4a6"/><rect x="629.0" y="350.1" width="37.2" height="36.3" fill="#a4a4a6"/><rect x="669.8" y="350.4" width="37.2" height="36.3" fill="#a4a4a6"/><rect x="710.5" y="350.8" width="37.2" height="36.3" fill="#a4a4a6"/><rect x="751.2" y="351.1" width="37.2" height="36.3" fill="#a4a4a6"/><rect x="792.0" y="351.4" width="37.2" height="36.4" fill="#a4a4a6"/><rect x="832.8" y="351.7" width="37.2" height="36.4" fill="#a4a4a6"/></g><polygon points="134.7,221.8 141.6,187.0 177.2,194.0 170.2,228.9" fill="#a4a4a6"/><polygon points="167.8,227.8 187.5,198.3 217.6,218.5 197.9,248.0" fill="#a4a4a6"/><polygon points="196.0,246.1 225.5,226.4 245.7,256.5 216.2,276.2" fill="#a4a4a6"/><polygon points="215.1,273.8 250.0,266.8 257.0,302.4 222.2,309.3" fill="#a4a4a6"/><polygon points="135.3,182.8 140.8,147.8 180.9,154.1 175.4,189.2" fill="#a4a4a6"/><polygon points="174.0,188.8 190.1,157.1 226.3,175.5 210.1,207.2" fill="#a4a4a6"/><polygon points="209.0,206.3 234.1,181.2 262.8,209.9 237.7,235.0" fill="#a4a4a6"/><polygon points="236.8,233.9 268.5,217.7 286.9,253.9 255.2,270.0" fill="#a4a4a6"/><polygon points="254.8,268.6 289.9,263.1 296.2,303.2 261.2,308.7" fill="#a4a4a6"/><polygon points="136.0,144.3 140.0,109.0 176.4,113.1 172.4,148.4" fill="#a4a4a6"/><polygon points="172.4,148.4 184.1,114.9 218.8,127.0 207.1,160.5" fill="#a4a4a6"/><polygon points="207.0,160.5 225.9,130.4 257.0,149.9 238.1,180.0" fill="#a4a4a6"/><polygon points="238.1,180.0 263.2,154.9 289.1,180.8 264.0,205.9" fill="#a4a4a6"/><polygon points="264.0,205.9 294.1,187.0 313.6,218.1 283.5,237.0" fill="#a4a4a6"/><polygon points="283.5,236.9 317.0,225.2 329.1,259.9 295.6,271.6" fill="#a4a4a6"/><polygon points="295.6,271.6 330.9,267.6 335.0,304.0 299.7,308.0" fill="#a4a4a6"/><polygon points="136.2,105.1 139.7,69.8 178.8,73.7 175.4,109.0" fill="#a4a4a6"/><polygon points="175.8,109.1 186.1,75.1 223.7,86.5 213.4,120.5" fill="#a4a4a6"/><polygon points="213.8,120.7 230.6,89.4 265.3,107.9 248.5,139.2" fill="#a4a4a6"/><polygon points="248.9,139.5 271.4,112.0 301.8,137.0 279.3,164.4" fill="#a4a4a6"/><polygon points="279.6,164.7 307.0,142.2 332.0,172.6 304.5,195.1" fill="#a4a4a6"/><polygon points="304.8,195.5 336.1,178.7 354.6,213.4 323.3,230.2" fill="#a4a4a6"/><polygon points="323.5,230.6 357.5,220.3 368.9,257.9 334.9,268.2" fill="#a4a4a6"/><polygon points="335.0,268.6 370.3,265.2 374.2,304.3 338.9,307.8" fill="#a4a4a6"/><polygon points="136.5,66.2 139.3,30.8 176.1,33.7 173.3,69.1" fill="#a4a4a6"/><polygon points="174.4,69.3 182.7,34.7 218.5,43.3 210.2,77.9" fill="#a4a4a6"/><polygon points="211.2,78.2 224.8,45.4 258.9,59.5 245.3,92.3" fill="#a4a4a6"/><polygon points="246.3,92.8 264.8,62.5 296.2,81.8 277.7,112.1" fill="#a4a4a6"/><polygon points="278.6,112.7 301.6,85.7 329.7,109.6 306.6,136.6" fill="#a4a4a6"/><polygon points="307.4,137.4 334.4,114.3 358.3,142.4 331.3,165.4" fill="#a4a4a6"/><polygon points="331.9,166.3 362.2,147.8 381.5,179.2 351.2,197.7" fill="#a4a4a6"/><polygon points="351.7,198.7 384.5,185.1 398.6,219.2 365.8,232.8" fill="#a4a4a6"/><polygon points="366.1,233.8 400.7,225.5 409.3,261.3 374.7,269.6" fill="#a4a4a6"/><polygon points="374.9,270.7 410.3,267.9 413.2,304.7 377.8,307.5" fill="#a4a4a6"/><polygon points="584.7,221.8 591.6,187.0 627.2,194.0 620.2,228.9" fill="#a4a4a6"/><polygon points="617.8,227.8 637.5,198.3 667.6,218.5 647.9,248.0" fill="#a4a4a6"/><polygon points="646.0,246.1 675.5,226.4 695.7,256.5 666.2,276.2" fill="#a4a4a6"/><polygon points="665.1,273.8 700.0,266.8 707.0,302.4 672.2,309.3" fill="#a4a4a6"/><polygon points="585.3,182.8 590.8,147.8 630.9,154.1 625.4,189.2" fill="#a4a4a6"/><polygon points="624.0,188.8 640.1,157.1 676.3,175.5 660.1,207.2" fill="#a4a4a6"/><polygon points="659.0,206.3 684.1,181.2 712.8,209.9 687.7,235.0" fill="#a4a4a6"/><polygon points="686.8,233.9 718.5,217.7 736.9,253.9 705.2,270.0" fill="#a4a4a6"/><polygon points="704.8,268.6 739.9,263.1 746.2,303.2 711.2,308.7" fill="#a4a4a6"/><polygon points="586.0,144.3 590.0,109.0 626.4,113.1 622.4,148.4" fill="#a4a4a6"/><polygon points="622.4,148.4 634.1,114.9 668.8,127.0 657.1,160.5" fill="#a4a4a6"/><polygon points="657.0,160.5 675.9,130.4 707.0,149.9 688.1,180.0" fill="#a4a4a6"/><polygon points="688.1,180.0 713.2,154.9 739.1,180.8 714.0,205.9" fill="#a4a4a6"/><polygon points="714.0,205.9 744.1,187.0 763.6,218.1 733.5,237.0" fill="#a4a4a6"/><polygon points="733.5,236.9 767.0,225.2 779.1,259.9 745.6,271.6" fill="#a4a4a6"/><polygon points="745.6,271.6 780.9,267.6 785.0,304.0 749.7,308.0" fill="#a4a4a6"/><polygon points="586.2,105.1 589.7,69.8 628.8,73.7 625.4,109.0" fill="#a4a4a6"/><polygon points="625.8,109.1 636.1,75.1 673.7,86.5 663.4,120.5" fill="#a4a4a6"/><polygon points="663.8,120.7 680.6,89.4 715.3,107.9 698.5,139.2" fill="#a4a4a6"/><polygon points="698.9,139.5 721.4,112.0 751.8,137.0 729.3,164.4" fill="#a4a4a6"/><polygon points="729.6,164.7 757.0,142.2 782.0,172.6 754.5,195.1" fill="#a4a4a6"/><polygon points="754.8,195.5 786.1,178.7 804.6,213.4 773.3,230.2" fill="#a4a4a6"/><polygon points="773.5,230.6 807.5,220.3 818.9,257.9 784.9,268.2" fill="#a4a4a6"/><polygon points="785.0,268.6 820.3,265.2 824.2,304.3 788.9,307.8" fill="#a4a4a6"/><polygon points="586.5,66.2 589.3,30.8 626.1,33.7 623.3,69.1" fill="#a4a4a6"/><polygon points="624.4,69.3 632.7,34.7 668.5,43.3 660.2,77.9" fill="#a4a4a6"/><polygon points="661.2,78.2 674.8,45.4 708.9,59.5 695.3,92.3" fill="#a4a4a6"/><polygon points="696.3,92.8 714.8,62.5 746.2,81.8 727.7,112.1" fill="#a4a4a6"/><polygon points="728.6,112.7 751.6,85.7 779.7,109.6 756.6,136.6" fill="#a4a4a6"/><polygon points="757.4,137.4 784.4,114.3 808.3,142.4 781.3,165.4" fill="#a4a4a6"/><polygon points="781.9,166.3 812.2,147.8 831.5,179.2 801.2,197.7" fill="#a4a4a6"/><polygon points="801.7,198.7 834.5,185.1 848.6,219.2 815.8,232.8" fill="#a4a4a6"/><polygon points="816.1,233.8 850.7,225.5 859.3,261.3 824.7,269.6" fill="#a4a4a6"/><polygon points="824.9,270.7 860.3,267.9 863.2,304.7 827.8,307.5" fill="#a4a4a6"/><polygon points="222.0,27.0 256.0,61.0 246.0,27.0" fill="#3a3a3a"/><polygon points="345.0,29.0 358.0,56.0 356.0,29.0" fill="#3a3a3a"/><polygon points="142.0,226.0 178.0,259.0 152.0,259.0" fill="#3a3a3a"/><polygon points="181.0,307.0 215.0,344.0 184.0,330.0" fill="#3a3a3a"/><polygon points="200.0,347.0 215.0,382.0 215.0,365.0" fill="#3a3a3a"/><polygon points="669.0,30.0 704.0,61.0 696.0,32.0" fill="#3a3a3a"/><polygon points="751.0,73.0 786.0,106.0 756.0,86.0" fill="#3a3a3a"/><polygon points="795.0,140.0 827.0,181.0 824.0,144.0" fill="#3a3a3a"/><polygon points="834.0,193.0 867.0,225.0 855.0,200.0" fill="#3a3a3a"/><polygon points="852.0,233.0 867.0,264.0 865.0,235.0" fill="#3a3a3a"/><polygon points="590.0,229.0 625.0,264.0 597.0,262.0" fill="#3a3a3a"/><polygon points="630.0,271.0 662.0,301.0 636.0,298.0" fill="#3a3a3a"/><polygon points="408.6,27.8 416.8,26.5 425.0,26.1 433.3,26.5 441.5,27.8 435.4,62.8 430.2,61.9 425.0,61.6 419.7,61.9 414.5,62.8" fill="#a4a4a6"/><polygon points="450.2,30.2 457.9,33.2 465.3,37.0 472.2,41.5 478.7,46.7 455.9,74.0 451.9,70.6 447.5,67.7 442.8,65.3 437.8,63.5" fill="#a4a4a6"/><polygon points="485.0,53.1 490.2,59.5 494.7,66.5 498.4,73.9 501.4,81.6 468.0,93.8 466.3,88.9 463.9,84.2 461.0,79.8 457.6,75.7" fill="#a4a4a6"/><polygon points="503.7,90.3 505.0,98.5 505.4,106.7 505.0,115.0 503.7,123.2 468.7,117.1 469.6,111.9 469.9,106.7 469.6,101.4 468.7,96.2" fill="#a4a4a6"/><polygon points="501.3,131.9 498.3,139.6 494.5,147.0 490.0,153.9 484.8,160.4 457.5,137.6 460.9,133.6 463.8,129.2 466.2,124.5 468.0,119.5" fill="#a4a4a6"/><polygon points="478.4,166.7 472.0,171.9 465.0,176.4 457.6,180.1 449.9,183.1 437.7,149.7 442.6,148.0 447.3,145.6 451.7,142.7 455.8,139.3" fill="#a4a4a6"/><polygon points="441.2,185.4 433.0,186.7 424.8,187.1 416.5,186.7 408.3,185.4 414.4,150.4 419.6,151.3 424.8,151.6 430.1,151.3 435.3,150.4" fill="#a4a4a6"/><polygon points="399.6,183.0 391.9,180.0 384.5,176.2 377.6,171.7 371.1,166.5 393.9,139.2 397.9,142.6 402.3,145.5 407.0,147.9 412.0,149.7" fill="#a4a4a6"/><polygon points="364.8,160.1 359.6,153.7 355.1,146.7 351.4,139.3 348.4,131.6 381.8,119.4 383.5,124.3 385.9,129.0 388.8,133.4 392.2,137.5" fill="#a4a4a6"/><polygon points="346.1,122.9 344.8,114.7 344.4,106.5 344.8,98.2 346.1,90.0 381.1,96.1 380.2,101.3 379.9,106.5 380.2,111.8 381.1,117.0" fill="#a4a4a6"/><polygon points="348.5,81.3 351.5,73.6 355.3,66.2 359.8,59.3 365.0,52.8 392.3,75.6 388.9,79.6 386.0,84.0 383.6,88.7 381.8,93.7" fill="#a4a4a6"/><polygon points="371.4,46.5 377.8,41.3 384.8,36.8 392.2,33.1 399.9,30.1 412.1,63.5 407.2,65.2 402.5,67.6 398.1,70.5 394.0,73.9" fill="#a4a4a6"/><polygon points="436.3,67.7 442.1,69.9 447.5,73.0 452.4,76.9 456.6,81.4 427.1,104.6 426.8,104.3 426.6,104.1 426.3,103.9 426.0,103.8" fill="#a4a4a6"/><polygon points="460.5,87.2 463.0,92.9 464.7,98.8 465.4,105.0 465.1,111.2 427.9,106.7 427.9,106.4 427.8,106.0 427.8,105.7 427.6,105.4" fill="#a4a4a6"/><polygon points="463.8,118.0 461.6,123.8 458.5,129.2 454.6,134.1 450.1,138.3 426.9,108.8 427.2,108.5 427.4,108.3 427.6,108.0 427.7,107.7" fill="#a4a4a6"/><polygon points="444.3,142.2 438.6,144.7 432.7,146.4 426.5,147.1 420.3,146.8 424.8,109.6 425.1,109.6 425.5,109.5 425.8,109.5 426.1,109.3" fill="#a4a4a6"/><polygon points="413.5,145.5 407.7,143.3 402.3,140.2 397.4,136.3 393.2,131.8 422.7,108.6 423.0,108.9 423.2,109.1 423.5,109.3 423.8,109.4" fill="#a4a4a6"/><polygon points="389.3,126.0 386.8,120.3 385.1,114.4 384.4,108.2 384.7,102.0 421.9,106.5 421.9,106.8 422.0,107.2 422.0,107.5 422.2,107.8" fill="#a4a4a6"/><polygon points="386.0,95.2 388.2,89.4 391.3,84.0 395.2,79.1 399.7,74.9 422.9,104.4 422.6,104.7 422.4,104.9 422.2,105.2 422.1,105.5" fill="#a4a4a6"/><polygon points="405.5,71.0 411.2,68.5 417.1,66.8 423.3,66.1 429.5,66.4 425.0,103.6 424.7,103.6 424.3,103.7 424.0,103.7 423.7,103.9" fill="#a4a4a6"/></svg>
<svg class="a" style="left:0px;top:0px;pointer-events:none" width="2634" height="1391" viewBox="0 0 2634 1391"><line x1="387" y1="690.9" x2="929.2" y2="694.9" stroke="#d4901c" stroke-width="2.6"/><line x1="1200" y1="696.7" x2="1742.3" y2="701" stroke="#d4901c" stroke-width="2.6"/><line x1="387" y1="690.9" x2="929.2" y2="694.9" stroke="#8cc23c" stroke-width="0.9"/><line x1="1200" y1="696.7" x2="1742.3" y2="701" stroke="#8cc23c" stroke-width="0.9"/><circle cx="387" cy="690.9" r="3" fill="#f07f10"/><circle cx="658.8" cy="693" r="3" fill="#f07f10"/><circle cx="929.2" cy="694.9" r="3" fill="#f07f10"/><circle cx="1200" cy="696.7" r="3" fill="#f07f10"/><circle cx="1471.2" cy="699.2" r="3" fill="#f07f10"/><circle cx="1742.3" cy="701" r="3" fill="#f07f10"/><line x1="530.6" y1="533" x2="723.1" y2="535.5" stroke="#f07482" stroke-width="2.0"/><line x1="764.8" y1="527.2" x2="835" y2="619" stroke="#f07482" stroke-width="2.0"/><line x1="835.9" y1="630.4" x2="835" y2="902.2" stroke="#f07482" stroke-width="2.0"/><circle cx="530.6" cy="533" r="2.9" fill="#ff7f0e"/><circle cx="658.8" cy="534.9" r="2.9" fill="#ff7f0e"/><circle cx="723.1" cy="535.5" r="2.9" fill="#ff7f0e"/><circle cx="764.8" cy="527.2" r="2.9" fill="#ff7f0e"/><circle cx="799.4" cy="573" r="2.9" fill="#ff7f0e"/><circle cx="835" cy="619" r="2.9" fill="#ff7f0e"/><circle cx="835.9" cy="630.4" r="2.9" fill="#ff7f0e"/><circle cx="835.5" cy="720.9" r="2.9" fill="#ff7f0e"/><circle cx="835" cy="902.2" r="2.9" fill="#ff7f0e"/><line x1="978" y1="533.4" x2="1170" y2="534.9" stroke="#f07482" stroke-width="2.0"/><line x1="1213.3" y1="527.2" x2="1282.8" y2="618.9" stroke="#f07482" stroke-width="2.0"/><line x1="1292" y1="630.3" x2="1290.5" y2="902.1" stroke="#f07482" stroke-width="2.0"/><circle cx="978" cy="533.4" r="2.9" fill="#ff7f0e"/><circle cx="1106.6" cy="535" r="2.9" fill="#ff7f0e"/><circle cx="1170" cy="534.9" r="2.9" fill="#ff7f0e"/><circle cx="1213.3" cy="527.2" r="2.9" fill="#ff7f0e"/><circle cx="1247.9" cy="573.2" r="2.9" fill="#ff7f0e"/><circle cx="1282.8" cy="618.9" r="2.9" fill="#ff7f0e"/><circle cx="1292" cy="630.3" r="2.9" fill="#ff7f0e"/><circle cx="1291.4" cy="720.8" r="2.9" fill="#ff7f0e"/><circle cx="1290.5" cy="902.1" r="2.9" fill="#ff7f0e"/><line x1="1012.8" y1="415.1" x2="1037" y2="415.1" stroke="#f0b020" stroke-width="2"/><line x1="1012.8" y1="459" x2="1037" y2="459" stroke="#f0b020" stroke-width="2"/><line x1="1003" y1="425" x2="1003" y2="449.2" stroke="#f0b020" stroke-width="2"/><line x1="1046.3" y1="425" x2="1046.3" y2="449.2" stroke="#f0b020" stroke-width="2"/><circle cx="1012.8" cy="415.1" r="2.6" fill="#ff7f0e"/><circle cx="1024.9" cy="415.1" r="2.6" fill="#ff7f0e"/><circle cx="1037" cy="415.1" r="2.6" fill="#ff7f0e"/><circle cx="1012.8" cy="459" r="2.6" fill="#ff7f0e"/><circle cx="1024.9" cy="459" r="2.6" fill="#ff7f0e"/><circle cx="1037" cy="459" r="2.6" fill="#ff7f0e"/><circle cx="1003" cy="425" r="2.6" fill="#ff7f0e"/><circle cx="1003" cy="437" r="2.6" fill="#ff7f0e"/><circle cx="1003" cy="449.2" r="2.6" fill="#ff7f0e"/><circle cx="1046.3" cy="425" r="2.6" fill="#ff7f0e"/><circle cx="1046.3" cy="437" r="2.6" fill="#ff7f0e"/><circle cx="1046.3" cy="449.2" r="2.6" fill="#ff7f0e"/><line x1="1013.9" y1="469.8" x2="1013.9" y2="545.8" stroke="#7cc43a" stroke-width="2"/><polygon points="1013.9,446.3 1008.3,469.5 1019.5,469.5" fill="#7cc43a"/><line x1="1034.6" y1="566" x2="1111" y2="566" stroke="#e8606e" stroke-width="2"/><polygon points="1111,560 1134.6,566 1111,572" fill="#f05a6a"/><circle cx="1013.9" cy="566" r="19.4" fill="none" stroke="#dcdcdc" stroke-width="2"/><circle cx="1025.2" cy="537.7" r="12" fill="none" stroke="#f0f0f0" stroke-width="1.6" stroke-dasharray="4.5 3.2"/><circle cx="1025.2" cy="537.7" r="12" fill="none" stroke="#d02020" stroke-width="1.6" stroke-dasharray="3.2 4.5" stroke-dashoffset="-4.5"/><line x1="1000" y1="537.5" x2="1018.4" y2="537.5" stroke="#000" stroke-width="1.6"/><line x1="1031.4" y1="537.5" x2="1050" y2="537.5" stroke="#000" stroke-width="1.6"/><line x1="1025.2" y1="513.4" x2="1025.2" y2="532" stroke="#000" stroke-width="1.6"/><line x1="1025.2" y1="543" x2="1025.2" y2="562.8" stroke="#000" stroke-width="1.6"/><circle cx="1025.2" cy="537.7" r="3" fill="#f0a030"/><rect x="1062" y="504.5" width="13.9" height="13.8" fill="#6a8fd0" stroke="#3a70d8" stroke-width="1.6"/></svg>
<div class="a" style="left:2px;top:72px;width:2171px;height:31px;background:rgba(38,38,38,0.55);border-radius:8px 8px 0 0;"></div>
<div class="a" style="left:2149px;top:103px;width:24px;height:833px;background:#1d1d1d;border-radius:0 0 8px 0;"></div>
<div class="a" style="left:12px;top:77px;width:38px;height:24px;background:#252525;border-radius:5px;box-sizing:border-box;border:1px solid #333333;"></div>
<svg class="a" style="left:16px;top:79px;" width="24" height="20" viewBox="0 0 24 20"><path d="M3 16 L15 16 M4 11 L12 11 M6 8 L4 19 M11 10 L13 19" stroke="#d8d8d8" stroke-width="1.3" fill="none"/><circle cx="16" cy="7" r="4.2" fill="#e0e0e0"/><circle cx="15" cy="6" r="1.5" fill="#999"/></svg>
<svg class="a" style="left:39px;top:86px;" width="10" height="6" viewBox="0 0 10 6"><path d="M1 1 L5 5 L9 1" fill="none" stroke="#d0d0d0" stroke-width="1.3"/></svg>
<div class="a" style="left:57px;top:77px;width:123px;height:24px;background:#252525;border-radius:5px;box-sizing:border-box;border:1px solid #333333;"></div>
<svg class="a" style="left:62px;top:79px;" width="22" height="20" viewBox="0 0 22 20"><rect x="2" y="5" width="4" height="4" fill="none" stroke="#bbb" stroke-width="1.2"/><rect x="2" y="15" width="4" height="4" fill="none" stroke="#bbb" stroke-width="1.2"/><rect x="14" y="15" width="4" height="4" fill="none" stroke="#bbb" stroke-width="1.2"/><rect x="13.5" y="2.5" width="5.5" height="5.5" fill="#e0e0e0"/><path d="M6 7 L13 7 M4 9 L4 15 M6 17 L14 17 M16 8 L16 15" stroke="#bbb" stroke-width="1.2"/></svg>
<div class="t" style="top:76.7px;font-size:15.2px;color:#e5e5e5;left:90px;">Edit Mode</div>
<svg class="a" style="left:166px;top:86px;" width="10" height="6" viewBox="0 0 10 6"><path d="M1 1 L5 5 L9 1" fill="none" stroke="#d0d0d0" stroke-width="1.3"/></svg>
<div class="t" style="top:76.7px;font-size:15.2px;color:#e5e5e5;left:196px;">View</div>
<div class="t" style="top:76.7px;font-size:15.2px;color:#e5e5e5;left:248px;">Select</div>
<div class="t" style="top:76.7px;font-size:15.2px;color:#e5e5e5;left:309px;">Add</div>
<div class="t" style="top:76.7px;font-size:15.2px;color:#e5e5e5;left:356px;">Curve</div>
<div class="t" style="top:76.7px;font-size:15.2px;color:#e5e5e5;left:414px;">Control Points</div>
<div class="t" style="top:76.7px;font-size:15.2px;color:#e5e5e5;left:528px;">Segments</div>
<div class="a" style="left:931px;top:77px;width:97px;height:24px;background:#252525;border-radius:5px;box-sizing:border-box;border:1px solid #333333;"></div>
<svg class="a" style="left:935px;top:79px;" width="22" height="20" viewBox="0 0 22 20"><path d="M4 3 L4 17 L18 17 M4 17 L16 6" stroke="#ddd" stroke-width="1.3" fill="none"/><path d="M2 5 L4 2 L6 5 M16 15 L19 17 L16 19 M13 5 L17 5 L17 9" stroke="#ddd" stroke-width="1.2" fill="none"/></svg>
<div class="t" style="top:76.7px;font-size:15.2px;color:#e5e5e5;left:963px;">Global</div>
<svg class="a" style="left:1014px;top:86px;" width="10" height="6" viewBox="0 0 10 6"><path d="M1 1 L5 5 L9 1" fill="none" stroke="#d0d0d0" stroke-width="1.3"/></svg>
<div class="a" style="left:1036px;top:77px;width:38px;height:24px;background:#252525;border-radius:5px;box-sizing:border-box;border:1px solid #333333;"></div>
<svg class="a" style="left:1040px;top:79px;" width="22" height="20" viewBox="0 0 22 20"><circle cx="7" cy="13" r="5" fill="none" stroke="#ddd" stroke-width="1.3"/><circle cx="13" cy="7" r="5" fill="none" stroke="#ddd" stroke-width="1.3"/><circle cx="10" cy="10" r="1.4" fill="#ddd"/></svg>
<svg class="a" style="left:1061px;top:86px;" width="10" height="6" viewBox="0 0 10 6"><path d="M1 1 L5 5 L9 1" fill="none" stroke="#d0d0d0" stroke-width="1.3"/></svg>
<div class="a" style="left:1082px;top:77px;width:63px;height:24px;background:#252525;border-radius:5px;box-sizing:border-box;border:1px solid #333333;"></div>
<div class="a" style="left:1083px;top:78px;width:22px;height:22px;background:#545454;border-radius:4px 0 0 4px;"></div>
<svg class="a" style="left:1083px;top:79px;" width="22" height="20" viewBox="0 0 22 20"><g transform="rotate(135 11 10)"><path d="M4.5 2.5 L4.5 10.5 A6.5 6.5 0 0 0 17.5 10.5 L17.5 2.5 L14 2.5 L14 10.5 A3 3 0 0 1 8 10.5 L8 2.5 Z" fill="none" stroke="#d0d0d0" stroke-width="1.2" stroke-linejoin="round"/></g></svg>
<svg class="a" style="left:1107px;top:79px;" width="22" height="20" viewBox="0 0 22 20"><path d="M2 12 L18 12 M3 9 L3 15 M8 10 L8 14 M12 10 L12 14 M17 9 L17 15" stroke="#ddd" stroke-width="1.2" fill="none"/><rect x="14" y="3" width="4.5" height="4.5" fill="#eee"/></svg>
<svg class="a" style="left:1132px;top:86px;" width="10" height="6" viewBox="0 0 10 6"><path d="M1 1 L5 5 L9 1" fill="none" stroke="#d0d0d0" stroke-width="1.3"/></svg>
<div class="a" style="left:1153px;top:77px;width:63px;height:24px;background:#252525;border-radius:5px;box-sizing:border-box;border:1px solid #333333;"></div>
<div class="a" style="left:1154px;top:78px;width:22px;height:22px;background:#545454;border-radius:4px 0 0 4px;"></div>
<svg class="a" style="left:1155px;top:79px;" width="20" height="20" viewBox="0 0 20 20"><circle cx="10" cy="10" r="7" fill="none" stroke="#ddd" stroke-width="1.3"/><circle cx="10" cy="10" r="2.2" fill="#eee"/></svg>
<svg class="a" style="left:1178px;top:79px;" width="22" height="20" viewBox="0 0 22 20"><path d="M2 17 Q6 17 8 10 Q10 2 11 2 Q12 2 14 10 Q16 17 20 17" fill="none" stroke="#888" stroke-width="1.2"/></svg>
<svg class="a" style="left:1203px;top:86px;" width="10" height="6" viewBox="0 0 10 6"><path d="M1 1 L5 5 L9 1" fill="none" stroke="#888" stroke-width="1.3"/></svg>
<div class="a" style="left:1814px;top:77px;width:38px;height:24px;background:#252525;border-radius:5px;box-sizing:border-box;border:1px solid #333333;"></div>
<svg class="a" style="left:1817px;top:79px;" width="24" height="20" viewBox="0 0 24 20"><path d="M3 7 L3 19 L6 16 L9 20 L11 19 L8 15 L12 15 Z" fill="#e0e0e0"/><path d="M8 7 Q13 1 19 7 Q13 13 8 7 Z" fill="none" stroke="#ddd" stroke-width="1.3"/><circle cx="13.5" cy="7" r="1.8" fill="#ddd"/></svg>
<svg class="a" style="left:1839px;top:86px;" width="10" height="6" viewBox="0 0 10 6"><path d="M1 1 L5 5 L9 1" fill="none" stroke="#d0d0d0" stroke-width="1.3"/></svg>
<div class="a" style="left:1860px;top:77px;width:48px;height:24px;background:#252525;border-radius:5px;box-sizing:border-box;border:1px solid #333333;"></div>
<div class="a" style="left:1860px;top:77px;width:23px;height:24px;background:#4772b3;border-radius:4px 0 0 4px;"></div>
<svg class="a" style="left:1861px;top:79px;" width="22" height="20" viewBox="0 0 22 20"><path d="M4 17 Q6 7 17 4" fill="none" stroke="#fff" stroke-width="1.4"/><path d="M12 4 L17 4 L17 9" fill="none" stroke="#fff" stroke-width="1.3"/><circle cx="5" cy="16" r="2.2" fill="none" stroke="#fff" stroke-width="1.3"/></svg>
<svg class="a" style="left:1891px;top:86px;" width="10" height="6" viewBox="0 0 10 6"><path d="M1 1 L5 5 L9 1" fill="none" stroke="#d0d0d0" stroke-width="1.3"/></svg>
<div class="a" style="left:1916px;top:77px;width:87px;height:24px;background:#252525;border-radius:5px;box-sizing:border-box;border:1px solid #333333;"></div>
<div class="a" style="left:1916px;top:77px;width:23px;height:24px;background:#4772b3;border-radius:4px 0 0 4px;"></div>
<svg class="a" style="left:1917px;top:79px;" width="22" height="20" viewBox="0 0 22 20"><circle cx="9" cy="12" r="6" fill="none" stroke="#fff" stroke-width="1.5"/><circle cx="12.5" cy="8.5" r="5.5" fill="#fff"/></svg>
<svg class="a" style="left:1945px;top:86px;" width="10" height="6" viewBox="0 0 10 6"><path d="M1 1 L5 5 L9 1" fill="none" stroke="#d0d0d0" stroke-width="1.3"/></svg>
<svg class="a" style="left:1967px;top:79px;" width="22" height="20" viewBox="0 0 22 20"><rect x="2" y="14" width="4" height="4" fill="none" stroke="#ccc" stroke-width="1.2"/><rect x="2" y="3" width="4" height="4" fill="none" stroke="#ccc" stroke-width="1.2"/><rect x="15" y="14" width="4" height="4" fill="none" stroke="#ccc" stroke-width="1.2"/><rect x="14" y="2" width="5.5" height="5.5" fill="#eee"/><path d="M6 5 L14 5 M4 7 L4 14 M6 16 L15 16 M17 8 L17 14" stroke="#ccc" stroke-width="1.2"/></svg>
<svg class="a" style="left:1991px;top:86px;" width="10" height="6" viewBox="0 0 10 6"><path d="M1 1 L5 5 L9 1" fill="none" stroke="#d0d0d0" stroke-width="1.3"/></svg>
<div class="a" style="left:2012px;top:77px;width:23px;height:24px;background:#4a4a4a;border-radius:5px;box-sizing:border-box;border:1px solid #4a4a4a;"></div>
<svg class="a" style="left:2013px;top:79px;" width="22" height="20" viewBox="0 0 22 20"><rect x="3.5" y="7" width="11" height="11" rx="1" fill="none" stroke="#ccc" stroke-width="1.4"/><path d="M7 7 L7 4 L18 4 L18 15 L14.5 15" fill="none" stroke="#ccc" stroke-width="1.4"/><path d="M7 10 L7 12 M8 15 L10 15" stroke="#ccc" stroke-width="1.2"/></svg>
<div class="a" style="left:2042.6px;top:77px;width:120.4px;height:24px;background:#242424;border-radius:5px;box-sizing:border-box;border:1px solid #2a2a2a;"></div>
<div class="a" style="left:2042.6px;top:77px;width:96px;height:24px;background:#4a4a4a;border-radius:5px 0 0 5px;"></div>
<div class="a" style="left:2066.7px;top:77px;width:23.1px;height:24px;background:#4772b3;"></div>
<div class="a" style="left:2089.8px;top:77px;width:1px;height:24px;background:#3a3a3a;"></div>
<div class="a" style="left:2114.4px;top:77px;width:1px;height:24px;background:#3a3a3a;"></div>
<svg class="a" style="left:2044px;top:79px;" width="22" height="20" viewBox="0 0 22 20"><circle cx="11" cy="10" r="8.5" fill="none" stroke="#ddd" stroke-width="1.2"/><ellipse cx="11" cy="10" rx="4" ry="8.5" fill="none" stroke="#ddd" stroke-width="1.1"/><path d="M3 7 L19 7 M3 13 L19 13" stroke="#ddd" stroke-width="1.1"/></svg>
<svg class="a" style="left:2067.5px;top:79px;" width="22" height="20" viewBox="0 0 22 20"><circle cx="11" cy="10" r="8.5" fill="#dde6f5" stroke="#fff" stroke-width="0.8"/></svg>
<svg class="a" style="left:2091.5px;top:79px;" width="22" height="20" viewBox="0 0 22 20"><circle cx="11" cy="10" r="8.5" fill="none" stroke="#ddd" stroke-width="1.2"/><path d="M11 1.5 A8.5 8.5 0 0 0 2.5 10 L11 10 Z" fill="#ccc"/><path d="M11 10 L11 18.5" stroke="#ddd" stroke-width="1"/><path d="M13 14 L15 16 M15 12 L17 14" stroke="#ddd" stroke-width="1"/></svg>
<svg class="a" style="left:2115.5px;top:79px;" width="22" height="20" viewBox="0 0 22 20"><circle cx="11" cy="10" r="8.5" fill="none" stroke="#ddd" stroke-width="1.2"/><path d="M6 8 Q7 4 11 3.5" fill="none" stroke="#ddd" stroke-width="1.5"/><path d="M12 17 L13 15 M14.5 16 L15.5 14 M16.5 14 L17.5 12" stroke="#ddd" stroke-width="1"/></svg>
<svg class="a" style="left:2146px;top:86px;" width="10" height="6" viewBox="0 0 10 6"><path d="M1 1 L5 5 L9 1" fill="none" stroke="#d0d0d0" stroke-width="1.3"/></svg>
<div class="a" style="left:12px;top:114px;width:50px;height:83px;background:#282828;border-radius:6px;"></div>
<div class="a" style="left:12px;top:206px;width:50px;height:170px;background:#282828;border-radius:6px;"></div>
<div class="a" style="left:12px;top:384.6px;width:50px;height:83.39999999999998px;background:#282828;border-radius:6px;"></div>
<div class="a" style="left:12px;top:476.6px;width:50px;height:126.39999999999998px;background:#282828;border-radius:6px;"></div>
<div class="a" style="left:12px;top:611.6px;width:50px;height:82.89999999999998px;background:#282828;border-radius:6px;"></div>
<div class="a" style="left:12px;top:704.5px;width:50px;height:82.5px;background:#282828;border-radius:6px;"></div>
<div class="a" style="left:12px;top:206px;width:50px;height:41px;background:#4772b3;border-radius:6px 6px 0 0;"></div>
<div class="a" style="left:12px;top:155.5px;width:50px;height:1.5px;background:#1f1f1f;"></div>
<div class="a" style="left:12px;top:246.5px;width:50px;height:1.5px;background:#1f1f1f;"></div>
<div class="a" style="left:12px;top:290px;width:50px;height:1.5px;background:#1f1f1f;"></div>
<div class="a" style="left:12px;top:333px;width:50px;height:1.5px;background:#1f1f1f;"></div>
<div class="a" style="left:12px;top:425.5px;width:50px;height:1.5px;background:#1f1f1f;"></div>
<div class="a" style="left:12px;top:518px;width:50px;height:1.5px;background:#1f1f1f;"></div>
<div class="a" style="left:12px;top:561px;width:50px;height:1.5px;background:#1f1f1f;"></div>
<div class="a" style="left:12px;top:652.5px;width:50px;height:1.5px;background:#1f1f1f;"></div>
<div class="a" style="left:12px;top:745.5px;width:50px;height:1.5px;background:#1f1f1f;"></div>
<svg class="a" style="left:17px;top:114.80000000000001px" width="40" height="40" viewBox="-5 -5 40 40"><rect x="4" y="4" width="22" height="22" fill="none" stroke="#d9aa5e" stroke-width="1.7" stroke-dasharray="4 2.6"/><path d="M12 9 L12 21 L21 15 Z" fill="#e6e6e6"/></svg>
<svg class="a" style="left:17px;top:156.4px" width="40" height="40" viewBox="-5 -5 40 40"><circle cx="15" cy="15" r="11" fill="none" stroke="#f0f0f0" stroke-width="1.9"/><circle cx="15" cy="15" r="11" fill="none" stroke="#a03030" stroke-width="1.9" stroke-dasharray="5.76 5.76"/><path d="M15 7.5 L15 12.5 M15 17.5 L15 22.5 M7.5 15 L12.5 15 M17.5 15 L22.5 15" stroke="#aaa" stroke-width="1.5"/></svg>
<svg class="a" style="left:17px;top:206.8px" width="40" height="40" viewBox="-5 -5 40 40"><path d="M15 8 L15 12 M15 18 L15 22 M8 15 L12 15 M18 15 L22 15" stroke="#fff" stroke-width="1.7"/><path d="M11 8 L15 3 L19 8 Z M11 22 L15 27 L19 22 Z M8 11 L3 15 L8 19 Z M22 11 L27 15 L22 19 Z" fill="#fff"/></svg>
<svg class="a" style="left:17px;top:249px" width="40" height="40" viewBox="-5 -5 40 40"><path d="M7 11 A9.5 9.5 0 0 1 23 10 M23 19 A9.5 9.5 0 0 1 7 20" fill="none" stroke="#e6e6e6" stroke-width="1.6"/><path d="M15 11 L19 15 L15 19 L11 15 Z" fill="#aaa"/><path d="M3 13 L7 19 L11 13 Z M19 17 L23 11 L27 17 Z" fill="#e6e6e6"/></svg>
<svg class="a" style="left:17px;top:291.8px" width="40" height="40" viewBox="-5 -5 40 40"><rect x="4" y="13" width="13" height="13" fill="#e6e6e6"/><path d="M8 9 L8 4 L26 4 L26 22 L20 22" fill="none" stroke="#e6e6e6" stroke-width="1.6"/><path d="M17 13 L23 7" stroke="#e6e6e6" stroke-width="1.8"/><path d="M18.5 6 L24 6 L24 11.5 Z" fill="#e6e6e6"/></svg>
<svg class="a" style="left:17px;top:335px" width="40" height="40" viewBox="-5 -5 40 40"><path d="M7 10 A10 10 0 0 1 10 7 M20 7 A10 10 0 0 1 23 10 M23 20 A10 10 0 0 1 20 23 M10 23 A10 10 0 0 1 7 20" fill="none" stroke="#e6e6e6" stroke-width="1.6"/><rect x="10" y="10" width="10" height="10" fill="#e6e6e6"/><path d="M12 6 L15 2 L18 6 Z M12 24 L15 28 L18 24 Z M6 12 L2 15 L6 18 Z M24 12 L28 15 L24 18 Z" fill="#e6e6e6"/></svg>
<svg class="a" style="left:17px;top:385px" width="40" height="40" viewBox="-5 -5 40 40"><path d="M8 16 L20 4 L24 8 L12 20 L6 22 Z" fill="#e6e6e6"/><path d="M5 25 Q12 17 17 22 Q22 27 26 19" fill="none" stroke="#7fd1a0" stroke-width="1.8"/></svg>
<svg class="a" style="left:17px;top:427px" width="40" height="40" viewBox="-5 -5 40 40"><path d="M4 3 L9 3 L9 22 L27 22 L27 27 L4 27 Z" fill="#e6e6e6"/><path d="M9 8 A14 14 0 0 1 23 22 L9 22 Z" fill="#7fd1a0"/><path d="M6 6 L9 6 M6 10 L9 10 M6 14 L9 14 M6 18 L9 18 M13 24 L13 27 M17 24 L17 27 M21 24 L21 27" stroke="#555" stroke-width="0.9"/></svg>
<svg class="a" style="left:17px;top:478px" width="40" height="40" viewBox="-5 -5 40 40"><path d="M7 14 L17 4 L21 8 L11 18 L5 20 Z" fill="#e6e6e6"/><path d="M4 25 Q10 18 15 22 Q20 26 26 17" fill="none" stroke="#7fd1a0" stroke-width="1.8"/><path d="M13 20 L17 10 L25 17" fill="none" stroke="#aaa" stroke-width="1"/><circle cx="13" cy="21" r="1.6" fill="#ddd"/><circle cx="17" cy="10" r="1.6" fill="#ddd"/><circle cx="25" cy="17" r="1.6" fill="#ddd"/></svg>
<svg class="a" style="left:17px;top:521px" width="40" height="40" viewBox="-5 -5 40 40"><path d="M6 15 L13 5 L19 10 L12 19 Z" fill="#e6e6e6"/><path d="M15 3 L19 0 L23 4 L20 8 Z" fill="#e6e6e6"/><path d="M4 26 Q10 18 15 22 Q20 26 26 17" fill="none" stroke="#7fd1a0" stroke-width="1.8"/><circle cx="11" cy="24" r="1.6" fill="#ddd"/><circle cx="17" cy="12" r="1.6" fill="#ddd"/><circle cx="26" cy="17" r="1.6" fill="#ddd"/><circle cx="26" cy="25" r="1.6" fill="#ddd"/></svg>
<svg class="a" style="left:17px;top:563px" width="40" height="40" viewBox="-5 -5 40 40"><path d="M5 27 Q6 18 11 15" fill="none" stroke="#e6e6e6" stroke-width="1.6" stroke-dasharray="2.5 1.5"/><path d="M11 15 Q19 11 25 5" fill="none" stroke="#7fd1a0" stroke-width="1.8"/><circle cx="5" cy="27" r="1.8" fill="#e6e6e6"/><circle cx="11" cy="15" r="1.8" fill="#e6e6e6"/><circle cx="25" cy="5" r="2.4" fill="#7fd1a0"/><path d="M10 10 L15 5" stroke="#7fd1a0" stroke-width="1.6"/><path d="M12 4 L16 4 L16 8 Z" fill="#7fd1a0"/></svg>
<svg class="a" style="left:17px;top:612px" width="40" height="40" viewBox="-5 -5 40 40"><path d="M4 26 L26 4" stroke="#e6e6e6" stroke-width="1.6"/><path d="M9 21 Q7 10 21 9 Q23 20 9 21 Z" fill="#c9b5e0"/><circle cx="15" cy="15" r="1.6" fill="#eee"/><path d="M3 3 L8 3 L3 8 Z M27 27 L22 27 L27 22 Z" fill="#c9b5e0"/><path d="M4 4 L9 9 M26 26 L21 21" stroke="#c9b5e0" stroke-width="1.4"/></svg>
<svg class="a" style="left:17px;top:653px" width="40" height="40" viewBox="-5 -5 40 40"><path d="M4 26 L26 4" stroke="#e6e6e6" stroke-width="1.8"/><path d="M5 20 L10 25 M7 18 L12 23 M9 16 L14 21 M16 9 L21 14 M18 7 L23 12 M20 5 L25 10" stroke="#c9b5e0" stroke-width="0.9"/><path d="M6 12 Q8 6 15 6 M24 18 Q22 24 16 25" fill="none" stroke="#c9b5e0" stroke-width="1.6"/><circle cx="26" cy="4" r="2.3" fill="#e6e6e6"/><circle cx="4" cy="26" r="2.3" fill="#e6e6e6"/></svg>
<svg class="a" style="left:17px;top:705px" width="40" height="40" viewBox="-5 -5 40 40"><path d="M3 12 L16 6 L27 17 L14 23 Z" fill="#e2d4f3"/><path d="M3 12 L3 15 L14 26 L14 23 Z" fill="#b8a2d2"/><path d="M14 23 L14 26 L27 20 L27 17 Z" fill="#cdb8e6"/><path d="M14 23 L14 26" stroke="#333" stroke-width="0.6"/><path d="M28 3 L23 5 L28 8 Z" fill="#c9b5e0"/><path d="M23 5 L29 5" stroke="#c9b5e0" stroke-width="1.3"/></svg>
<svg class="a" style="left:17px;top:748.5px" width="40" height="40" viewBox="-5 -5 40 40"><path d="M4 26 L12 23 L11 16 L19 16 L26 10" fill="none" stroke="#c9b5e0" stroke-width="1.4"/><circle cx="4" cy="26" r="2.2" fill="#c9b5e0"/><circle cx="12" cy="23" r="2.2" fill="#c9b5e0"/><circle cx="11" cy="16" r="2.2" fill="#c9b5e0"/><circle cx="19" cy="16" r="2.2" fill="#c9b5e0"/><circle cx="26" cy="10" r="2.2" fill="#c9b5e0"/></svg>
<svg class="a" style="left:54px;top:148.5px;" width="5" height="5" viewBox="0 0 5 5"><path d="M5 0 L5 5 L0 5 Z" fill="#999"/></svg>
<svg class="a" style="left:54px;top:326px;" width="5" height="5" viewBox="0 0 5 5"><path d="M5 0 L5 5 L0 5 Z" fill="#999"/></svg>
<svg class="a" style="left:54px;top:418.5px;" width="5" height="5" viewBox="0 0 5 5"><path d="M5 0 L5 5 L0 5 Z" fill="#999"/></svg>
<svg class="a" style="left:54px;top:596px;" width="5" height="5" viewBox="0 0 5 5"><path d="M5 0 L5 5 L0 5 Z" fill="#999"/></svg>
<div class="t" style="top:112.7px;font-size:15.2px;color:#e5e5e5;left:84px;">Top Orthographic</div>
<div class="t" style="top:135.7px;font-size:15.2px;color:#e5e5e5;left:84px;">(1) BézierCurve</div>
<div class="t" style="top:158.7px;font-size:15.2px;color:#e5e5e5;left:84px;">10 Centimeters</div>
<svg class="a" style="left:1688.7px;top:109.30000000000001px;" width="120" height="120" viewBox="0 0 120 120"><line x1="60.0" y1="18.299999999999983" x2="60.0" y2="100.69999999999999" stroke="#7bb31e" stroke-width="2.5"/><line x1="18.700000000000045" y1="60.0" x2="101.29999999999995" y2="60.0" stroke="#d63a52" stroke-width="2.5"/><circle cx="18.700000000000045" cy="60.0" r="9.8" fill="#693540" stroke="#c73248" stroke-width="1.6"/><circle cx="60.0" cy="100.69999999999999" r="9.8" fill="#4b5f2b" stroke="#72a519" stroke-width="1.6"/><circle cx="60.0" cy="18.299999999999983" r="10.5" fill="#7bb31e"/><text x="60.0" y="23.299999999999983" text-anchor="middle" font-size="14.5" font-weight="bold" font-family="Liberation Sans" fill="#1a2a08">Y</text><circle cx="101.29999999999995" cy="60.0" r="10.5" fill="#d63a52"/><text x="101.29999999999995" y="65.0" text-anchor="middle" font-size="14.5" font-weight="bold" font-family="Liberation Sans" fill="#3a0a14">X</text><circle cx="60.0" cy="60.0" r="11" fill="#2e8ff0"/><text x="60.0" y="65.0" text-anchor="middle" font-size="14.5" font-weight="bold" font-family="Liberation Sans" fill="#0a2a50">Z</text></svg>
<div class="a" style="left:1767.5px;top:221.8px;width:35px;height:35px;background:rgba(30,30,30,0.55);border-radius:50%;"></div>
<div class="a" style="left:1767.5px;top:261.2px;width:35px;height:35px;background:rgba(30,30,30,0.55);border-radius:50%;"></div>
<div class="a" style="left:1767.5px;top:299.3px;width:35px;height:35px;background:rgba(30,30,30,0.55);border-radius:50%;"></div>
<div class="a" style="left:1767.5px;top:338.1px;width:35px;height:35px;background:rgba(30,30,30,0.55);border-radius:50%;"></div>
<svg class="a" style="left:1770px;top:224px;" width="30" height="30" viewBox="0 0 30 30"><circle cx="17" cy="12" r="7" fill="none" stroke="#ddd" stroke-width="2"/><path d="M12 17 L6 23" stroke="#ddd" stroke-width="3" stroke-linecap="round"/><path d="M17 8.5 L17 15.5 M13.5 12 L20.5 12" stroke="#ddd" stroke-width="1.3"/></svg>
<svg class="a" style="left:1770px;top:264px;" width="30" height="30" viewBox="0 0 30 30"><path d="M9 24 Q6 18 6 14 L8 12 L10 15 L10 6 Q11 4 12 6 L12 13 L12 4 Q13.5 2 15 4 L15 13 L15 5 Q16.5 3 18 5 L18 13 L18 7 Q19.5 5 21 7 L21 18 Q20 23 18 25 Z" fill="#e6e6e6"/></svg>
<svg class="a" style="left:1770px;top:302px;" width="30" height="30" viewBox="0 0 30 30"><circle cx="11" cy="10" r="4.5" fill="none" stroke="#ddd" stroke-width="1.6"/><circle cx="19" cy="9" r="3.6" fill="none" stroke="#ddd" stroke-width="1.6"/><rect x="8" y="15" width="12" height="8" fill="none" stroke="#ddd" stroke-width="1.6"/><path d="M21 19 L26 16 L26 23 Z" fill="none" stroke="#ddd" stroke-width="1.4"/><path d="M5 17 L8 17" stroke="#ddd" stroke-width="1.4"/></svg>
<svg class="a" style="left:1745px;top:337px;" width="42" height="40" viewBox="0 0 42 40"><circle cx="18" cy="18.6" r="17.5" fill="none" stroke="#e36a1a" stroke-width="1.4"/><circle cx="18" cy="18.6" r="10" fill="none" stroke="#e36a1a" stroke-width="1.4" stroke-dasharray="3 2.5"/><circle cx="18" cy="18.6" r="2.2" fill="#e36a1a"/></svg>
<svg class="a" style="left:1773px;top:343px;" width="26" height="26" viewBox="0 0 26 26"><rect x="2" y="2" width="22" height="22" fill="none" stroke="#e6e6e6" stroke-width="1.7"/><path d="M9.3 2 L9.3 24 M16.6 2 L16.6 24 M2 9.3 L24 9.3 M2 16.6 L24 16.6" stroke="#e6e6e6" stroke-width="1.5"/></svg>
<div class="a" style="left:1824px;top:104px;width:316px;height:254px;background:#3d3d3d;border-radius:6px;"></div>
<svg class="a" style="left:1835px;top:117.5px;" width="11.0" height="6.6000000000000005" viewBox="0 0 11.0 6.6000000000000005"><path d="M1 1 L5.5 5.5 L9.9 1" fill="none" stroke="#e0e0e0" stroke-width="1.3"/></svg>
<div class="t" style="top:108.7px;font-size:15.2px;color:#e6e6e6;left:1851.5px;">Transform</div>
<svg class="a" style="left:2116px;top:116px;" width="16" height="8" viewBox="0 0 16 8"><rect x="0" y="0" width="2" height="2" fill="#999"/><rect x="0" y="4" width="2" height="2" fill="#999"/><rect x="4" y="0" width="2" height="2" fill="#999"/><rect x="4" y="4" width="2" height="2" fill="#999"/><rect x="8" y="0" width="2" height="2" fill="#999"/><rect x="8" y="4" width="2" height="2" fill="#999"/><rect x="12" y="0" width="2" height="2" fill="#999"/><rect x="12" y="4" width="2" height="2" fill="#999"/></svg>
<div class="t" style="top:145.7px;font-size:15.2px;color:#c8c8c8;left:1835px;">Median:</div>
<div class="a" style="left:1835px;top:172px;width:294px;height:73px;background:#545454;border-radius:5px;"></div>
<div class="a" style="left:1835px;top:195.5px;width:294px;height:1px;background:#3d3d3d;"></div>
<div class="a" style="left:1835px;top:220px;width:294px;height:1px;background:#3d3d3d;"></div>
<div class="t" style="top:171.7px;font-size:15.2px;color:#e5e5e5;left:1854px;">X</div>
<div class="t" style="top:171.7px;font-size:15.2px;color:#e5e5e5;right:522px;letter-spacing:0.45px;">-0.063575 m</div>
<div class="t" style="top:196.2px;font-size:15.2px;color:#e5e5e5;left:1854px;">Y</div>
<div class="t" style="top:196.2px;font-size:15.2px;color:#e5e5e5;right:522px;letter-spacing:0.45px;">-0.15808 m</div>
<div class="t" style="top:220.7px;font-size:15.2px;color:#e5e5e5;left:1854px;">Z</div>
<div class="t" style="top:220.7px;font-size:15.2px;color:#e5e5e5;right:522px;letter-spacing:0.45px;">-0.041663 m</div>
<div class="a" style="left:1835px;top:249px;width:147px;height:23px;background:#545454;border-radius:5px 0 0 5px;"></div>
<div class="a" style="left:1982px;top:249px;width:147px;height:23px;background:#4772b3;border-radius:0 5px 5px 0;"></div>
<div class="t" style="top:248.7px;font-size:15.2px;color:#e5e5e5;left:1837.6px;width:140px;text-align:center;">Global</div>
<div class="t" style="top:248.7px;font-size:15.2px;color:#ffffff;left:1985.0px;width:140px;text-align:center;">Local</div>
<div class="a" style="left:1835px;top:276px;width:294px;height:23px;background:#545454;border-radius:5px;"></div>
<div class="t" style="top:275.7px;font-size:15.2px;color:#e5e5e5;left:1854px;">Mean Weight</div>
<div class="t" style="top:275.7px;font-size:15.2px;color:#e5e5e5;right:522px;letter-spacing:0.45px;">0.583</div>
<div class="a" style="left:1835px;top:303px;width:294px;height:23px;background:#545454;border-radius:5px;"></div>
<div class="t" style="top:302.7px;font-size:15.2px;color:#e5e5e5;left:1854px;">Mean Radius</div>
<div class="t" style="top:302.7px;font-size:15.2px;color:#e5e5e5;right:522px;letter-spacing:0.45px;">1.000</div>
<div class="a" style="left:1835px;top:330px;width:294px;height:23px;background:#545454;border-radius:5px;"></div>
<div class="t" style="top:329.7px;font-size:15.2px;color:#e5e5e5;left:1854px;">Mean Tilt</div>
<div class="t" style="top:329.7px;font-size:15.2px;color:#e5e5e5;right:522px;letter-spacing:0.45px;">0°</div>
<div class="a" style="left:2149px;top:110px;width:22px;height:50px;background:#2a2a2a;border-radius:0 5px 5px 0;box-sizing:border-box;border:1px solid #3a3a3a;border-left:none;"></div>
<div class="t" style="left:2100.6px;top:124.0px;width:120px;text-align:center;transform:rotate(90deg);font-size:15.5px;color:#e0e0e0;line-height:22px">Item</div>
<div class="a" style="left:2149px;top:165px;width:22px;height:50px;background:#1d1d1d;border-radius:0 5px 5px 0;box-sizing:border-box;border:1px solid #3a3a3a;border-left:none;"></div>
<div class="t" style="left:2100.6px;top:179.0px;width:120px;text-align:center;transform:rotate(90deg);font-size:15.5px;color:#e0e0e0;line-height:22px">Tool</div>
<div class="a" style="left:2149px;top:221px;width:22px;height:51px;background:#1d1d1d;border-radius:0 5px 5px 0;box-sizing:border-box;border:1px solid #3a3a3a;border-left:none;"></div>
<div class="t" style="left:2100.6px;top:235.5px;width:120px;text-align:center;transform:rotate(90deg);font-size:15.5px;color:#e0e0e0;line-height:22px">View</div>
<div class="a" style="left:2px;top:940px;width:2171px;height:388px;background:#1d1d1d;border-radius:8px;overflow:hidden">
<div class="a" style="left:0;top:0;width:100%;height:100%;background-image:radial-gradient(circle, #242424 0.8px, transparent 1.1px);background-size:23.5px 23.5px;background-position:-1.75px -3.85px"></div>
<div class="a" style="left:0;top:0;width:100%;height:30px;background:#1d1d1d"></div>
</div>
<div class="a" style="left:12px;top:1321.5px;width:1812px;height:4.5px;background:#2e2e2e;border-radius:2.5px;"></div>
<svg class="a" style="left:0;top:0;clip-path:inset(940px 0 63.5px 0)" width="2634" height="1391"><path d="M827 1051.5 C 845 1052, 916 1059, 934 1059.5" fill="none" stroke="#00d6a3" stroke-width="2.6"/><path d="M827 1051.5 C 872 1051.5, 869 1242.3, 914 1242.3" fill="none" stroke="#a8f2dc" stroke-width="2.2"/><path d="M495 1330 C 520 1220, 530 1153.5, 567.8 1153.5" fill="none" stroke="#00d6a3" stroke-width="2.6"/><path d="M1159.5 1034.3 C 1300 1036, 1420 1110, 1720 1332" fill="none" stroke="#00d6a3" stroke-width="2.6"/><path d="M1179.5 1217.6 C 1300 1220, 1420 1250, 1600 1332" fill="none" stroke="#c8302e" stroke-width="2.4"/><path d="M1573 1312 L1568 1325" stroke="#c8302e" stroke-width="1.8"/><path d="M1179.5 1217.6 C 1230 1225, 1270 1280, 1292 1332" fill="none" stroke="#b0f5e0" stroke-width="2.2"/></svg>
<div class="a" style="left:10.5px;top:943px;width:40px;height:24px;background:#242424;border-radius:5px;box-sizing:border-box;border:1px solid #303030;"></div>
<svg class="a" style="left:14px;top:945px;" width="26" height="20" viewBox="0 0 26 20"><circle cx="6" cy="5" r="2.4" fill="#aaa"/><circle cx="11" cy="6" r="2.2" fill="#aaa"/><circle cx="8.5" cy="12" r="3" fill="#ccc"/><circle cx="15" cy="15" r="4.2" fill="#e8e8e8"/></svg>
<svg class="a" style="left:39px;top:953px;" width="10" height="6" viewBox="0 0 10 6"><path d="M1 1 L5 5 L9 1" fill="none" stroke="#d0d0d0" stroke-width="1.3"/></svg>
<div class="a" style="left:57px;top:943px;width:99.5px;height:24px;background:#242424;border-radius:5px;box-sizing:border-box;border:1px solid #303030;"></div>
<div class="t" style="top:944.2px;font-size:15.2px;color:#e6e6e6;left:67.5px;">Modifier</div>
<svg class="a" style="left:145px;top:953px;" width="10" height="6" viewBox="0 0 10 6"><path d="M1 1 L5 5 L9 1" fill="none" stroke="#d0d0d0" stroke-width="1.3"/></svg>
<div class="t" style="top:944.2px;font-size:15.2px;color:#e5e5e5;left:172px;">View</div>
<div class="t" style="top:944.2px;font-size:15.2px;color:#e5e5e5;left:224px;">Select</div>
<div class="t" style="top:944.2px;font-size:15.2px;color:#e5e5e5;left:284.8px;">Add</div>
<div class="t" style="top:944.2px;font-size:15.2px;color:#e5e5e5;left:332px;">Node</div>
<div class="a" style="left:919.5px;top:944px;width:277px;height:23.5px;background:#242424;border-radius:5px;box-sizing:border-box;border:1px solid #303030;"></div>
<div class="a" style="left:958px;top:945px;width:163.6px;height:21.5px;background:#1d1d1d;"></div>
<div class="a" style="left:1121.6px;top:945px;width:73.4px;height:21.5px;background:#484848;border-radius:0 4px 4px 0;"></div>
<div class="a" style="left:1146px;top:945px;width:1px;height:21.5px;background:#3a3a3a;"></div>
<div class="a" style="left:1170.5px;top:945px;width:1px;height:21.5px;background:#3a3a3a;"></div>
<svg class="a" style="left:924px;top:946px;" width="34" height="20" viewBox="0 0 34 20"><rect x="4" y="1.5" width="10" height="7" rx="2.2" fill="#e0e0e0"/><rect x="5.5" y="4.6" width="7" height="1" fill="#555"/><rect x="2" y="11.5" width="10" height="7" rx="2.2" fill="#e0e0e0"/><rect x="3.5" y="14.6" width="7" height="1" fill="#555"/><path d="M15 3.5 Q18 3.5 18 7 L18 12.5 Q18 16 15 16" fill="none" stroke="#ccc" stroke-width="1.2"/><path d="M12.5 16 L15.5 14 L15.5 18 Z" fill="#ccc"/><path d="M21 9 L24.5 12.5 L28 9" fill="none" stroke="#ccc" stroke-width="1.2"/></svg>
<div class="t" style="top:944.2px;font-size:15.2px;color:#e6e6e6;left:968px;">Geometry Nodes.001</div>
<svg class="a" style="left:1122px;top:946px;" width="22" height="20" viewBox="0 0 22 20"><path d="M11 3 L17 5 L17 10 Q17 15 11 18 Q5 15 5 10 L5 5 Z" fill="none" stroke="#999" stroke-width="1.3"/></svg>
<svg class="a" style="left:1146.5px;top:946px;" width="22" height="20" viewBox="0 0 22 20"><rect x="4" y="7" width="10" height="10" fill="none" stroke="#bbb" stroke-width="1.3"/><path d="M8 7 L8 3 L15 3 L18 6 L18 13 L14 13" fill="none" stroke="#bbb" stroke-width="1.3"/></svg>
<svg class="a" style="left:1171px;top:946px;" width="22" height="20" viewBox="0 0 22 20"><path d="M6 5 L16 15 M16 5 L6 15" stroke="#ccc" stroke-width="1.4"/></svg>
<svg class="a" style="left:1204px;top:944px;" width="24" height="24" viewBox="0 0 24 24"><path d="M13 3 L20 10 L16 11 L12 15 L12 18 L5 11 L8 11 L12 7 Z" fill="none" stroke="#aaa" stroke-width="1.3"/><path d="M8 15 L3 20" stroke="#aaa" stroke-width="1.3"/></svg>
<div class="a" style="left:2084px;top:943.5px;width:24px;height:23.5px;background:#545454;border-radius:5px;box-sizing:border-box;border:1px solid #545454;"></div>
<svg class="a" style="left:2085px;top:945px;" width="22" height="20" viewBox="0 0 22 20"><g transform="rotate(135 11 10)"><path d="M4.5 2.5 L4.5 10.5 A6.5 6.5 0 0 0 17.5 10.5 L17.5 2.5 L14 2.5 L14 10.5 A3 3 0 0 1 8 10.5 L8 2.5 Z" fill="none" stroke="#d0d0d0" stroke-width="1.2" stroke-linejoin="round"/></g></svg>
<div class="a" style="left:2115px;top:943.5px;width:49px;height:23.5px;background:#242424;border-radius:5px;box-sizing:border-box;border:1px solid #303030;"></div>
<div class="a" style="left:2115px;top:943.5px;width:24px;height:23.5px;background:#4772b3;border-radius:5px 0 0 5px;"></div>
<svg class="a" style="left:2116px;top:945px;" width="22" height="20" viewBox="0 0 22 20"><circle cx="9" cy="12" r="6" fill="none" stroke="#fff" stroke-width="1.5"/><circle cx="12.5" cy="8.5" r="5.5" fill="#fff"/></svg>
<svg class="a" style="left:2147px;top:953px;" width="10" height="6" viewBox="0 0 10 6"><path d="M1 1 L5 5 L9 1" fill="none" stroke="#d0d0d0" stroke-width="1.3"/></svg>
<svg class="a" style="left:2px;top:990px;" width="10" height="14" viewBox="0 0 10 14"><path d="M2 2 L7 7 L2 12" fill="none" stroke="#888" stroke-width="1.3"/></svg>
<svg class="a" style="left:23px;top:987px;" width="22" height="20" viewBox="0 0 22 20"><path d="M1 5 L1 1 L5 1 M15 1 L19 1 L19 5 M19 15 L19 19 L15 19 M5 19 L1 19 L1 15" fill="none" stroke="#bbb" stroke-width="1.5"/><rect x="5" y="5" width="10" height="10" fill="#e6e6e6"/></svg>
<div class="t" style="top:986.2px;font-size:15.2px;color:#e6e6e6;left:54px;">BézierCurve</div>
<svg class="a" style="left:151px;top:989px;" width="12" height="16" viewBox="0 0 12 16"><path d="M2 2 L9 8 L2 14" fill="none" stroke="#ccc" stroke-width="1.4"/></svg>
<svg class="a" style="left:172px;top:987px;" width="22" height="22" viewBox="0 0 22 22"><circle cx="4" cy="4" r="2.2" fill="#aaa"/><circle cx="9" cy="5" r="2" fill="#aaa"/><circle cx="6.5" cy="11" r="3" fill="#ccc"/><circle cx="13" cy="14" r="4.2" fill="#e8e8e8"/></svg>
<div class="t" style="top:986.2px;font-size:15.2px;color:#e6e6e6;left:203.4px;">GeometryNodes</div>
<svg class="a" style="left:330px;top:989px;" width="12" height="16" viewBox="0 0 12 16"><path d="M2 2 L9 8 L2 14" fill="none" stroke="#ccc" stroke-width="1.4"/></svg>
<svg class="a" style="left:352px;top:987px;" width="22" height="22" viewBox="0 0 22 22"><rect x="4" y="1.5" width="10" height="7" rx="2.2" fill="#e0e0e0"/><rect x="5.5" y="4.6" width="7" height="1" fill="#555"/><rect x="2" y="11.5" width="10" height="7" rx="2.2" fill="#e0e0e0"/><rect x="3.5" y="14.6" width="7" height="1" fill="#555"/><path d="M15 3.5 Q18 3.5 18 7 L18 12.5 Q18 16 15 16" fill="none" stroke="#ccc" stroke-width="1.2"/><path d="M12.5 16 L15.5 14 L15.5 18 Z" fill="#ccc"/></svg>
<div class="t" style="top:986.2px;font-size:15.2px;color:#e6e6e6;left:382px;">Geometry Nodes.001</div>
<div class="a" style="left:568px;top:1013.3px;width:258.5px;height:229px;background:#303030;border-radius:5px;box-shadow:0 1px 4px rgba(0,0,0,0.5);"></div>
<div class="a" style="left:568px;top:1013.3px;width:258.5px;height:23px;background:#374727;border-radius:4px 4px 0 0;"></div>
<svg class="a" style="left:580px;top:1021.8px;" width="10.5" height="6.300000000000001" viewBox="0 0 10.5 6.300000000000001"><path d="M1 1 L5.25 5.25 L9.450000000000001 1" fill="none" stroke="#e0e0e0" stroke-width="1.3"/></svg>
<div class="t" style="top:1013.0px;font-size:14.0px;color:#e6e6e6;left:596px;">Guidelines</div>
<svg class="a" style="left:796.5px;top:1015.3px;" width="26" height="22" viewBox="0 0 26 22"><rect x="4" y="1.5" width="10" height="7" rx="2.2" fill="#e0e0e0"/><rect x="5.5" y="4.6" width="7" height="1" fill="#555"/><rect x="2" y="11.5" width="10" height="7" rx="2.2" fill="#e0e0e0"/><rect x="3.5" y="14.6" width="7" height="1" fill="#555"/><path d="M15 3.5 Q18 3.5 18 7 L18 12.5 Q18 16 15 16" fill="none" stroke="#ccc" stroke-width="1.2"/><path d="M12.5 16 L15.5 14 L15.5 18 Z" fill="#ccc"/><text x="17" y="21" font-size="11" font-family="Liberation Sans" fill="#e6e6e6">4</text></svg>
<div class="t" style="top:1039.6px;font-size:14.0px;color:#e0e0e0;right:1821.5px;">Curves</div>
<div class="t" style="top:1065.4px;font-size:14.0px;color:#e0e0e0;right:1821.5px;">Num Duplications</div>
<div class="t" style="top:1090.6px;font-size:14.0px;color:#e0e0e0;right:1821.5px;">Distance outer_inner</div>
<div class="t" style="top:1116.8px;font-size:14.0px;color:#e0e0e0;right:1821.5px;">Spline ID</div>
<div class="t" style="top:1141.6px;font-size:14.0px;color:#e0e0e0;left:580px;">Geometry</div>
<div class="a" style="left:580px;top:1167.5px;width:233px;height:21px;background:#545454;border-radius:4px;"></div>
<div class="t" style="top:1166.2px;font-size:14.0px;color:#e0e0e0;left:596px;">Num Duplications</div>
<div class="t" style="top:1166.2px;font-size:14.0px;color:#e0e0e0;right:1834px;letter-spacing:0.45px;">5</div>
<div class="a" style="left:580px;top:1192.5px;width:233px;height:21px;background:#545454;border-radius:4px;"></div>
<div class="t" style="top:1191.2px;font-size:14.0px;color:#e0e0e0;left:596px;">Distance outer_inner</div>
<div class="t" style="top:1191.2px;font-size:14.0px;color:#e0e0e0;right:1834px;letter-spacing:0.45px;">-0.220</div>
<div class="a" style="left:580px;top:1217.7px;width:233px;height:21px;background:#545454;border-radius:4px;"></div>
<div class="t" style="top:1216.4px;font-size:14.0px;color:#e0e0e0;left:596px;">Spline ID</div>
<div class="t" style="top:1216.4px;font-size:14.0px;color:#e0e0e0;right:1834px;letter-spacing:0.45px;">0</div>
<div class="a" style="left:934px;top:996.3px;width:224.5px;height:156px;background:#303030;border-radius:5px;box-shadow:0 1px 4px rgba(0,0,0,0.5);"></div>
<div class="a" style="left:934px;top:996.3px;width:224.5px;height:21.5px;background:#374727;border-radius:4px 4px 0 0;"></div>
<svg class="a" style="left:946px;top:1004.05px;" width="10.5" height="6.300000000000001" viewBox="0 0 10.5 6.300000000000001"><path d="M1 1 L5.25 5.25 L9.450000000000001 1" fill="none" stroke="#e0e0e0" stroke-width="1.3"/></svg>
<div class="t" style="top:995.2px;font-size:14.0px;color:#e6e6e6;left:962px;">CuttedQuadraticTiles2</div>
<svg class="a" style="left:1128.5px;top:998.3px;" width="26" height="22" viewBox="0 0 26 22"><rect x="4" y="1.5" width="10" height="7" rx="2.2" fill="#e0e0e0"/><rect x="5.5" y="4.6" width="7" height="1" fill="#555"/><rect x="2" y="11.5" width="10" height="7" rx="2.2" fill="#e0e0e0"/><rect x="3.5" y="14.6" width="7" height="1" fill="#555"/><path d="M15 3.5 Q18 3.5 18 7 L18 12.5 Q18 16 15 16" fill="none" stroke="#ccc" stroke-width="1.2"/><path d="M12.5 16 L15.5 14 L15.5 18 Z" fill="#ccc"/><text x="17" y="21" font-size="11" font-family="Liberation Sans" fill="#e6e6e6">4</text></svg>
<div class="t" style="top:1022.5px;font-size:14.0px;color:#e0e0e0;right:1487px;">Geometry</div>
<div class="t" style="top:1047.6px;font-size:14.0px;color:#e0e0e0;left:946px;">Geometry</div>
<div class="a" style="left:946.4px;top:1075px;width:199px;height:21.3px;background:#545454;border-radius:4px;"></div>
<div class="t" style="top:1073.9px;font-size:14.0px;color:#e0e0e0;left:962.4px;">Tile Length</div>
<div class="t" style="top:1073.9px;font-size:14.0px;color:#e0e0e0;right:1501.6px;letter-spacing:0.45px;">0.200</div>
<div class="a" style="left:946.4px;top:1100.7px;width:199px;height:21.3px;background:#545454;border-radius:4px;"></div>
<div class="t" style="top:1099.6px;font-size:14.0px;color:#e0e0e0;left:962.4px;">Tile Separation</div>
<div class="t" style="top:1099.6px;font-size:14.0px;color:#e0e0e0;right:1501.6px;letter-spacing:0.45px;">0.020</div>
<div class="a" style="left:946.4px;top:1125.8px;width:199px;height:21.3px;background:#545454;border-radius:4px;"></div>
<div class="t" style="top:1124.7px;font-size:14.0px;color:#e0e0e0;left:962.4px;">Grid Splines</div>
<div class="t" style="top:1124.7px;font-size:14.0px;color:#e0e0e0;right:1501.6px;letter-spacing:0.45px;">0.010</div>
<div class="a" style="left:914px;top:1179.3px;width:266.5px;height:129px;background:#303030;border-radius:5px;box-sizing:border-box;border:1.5px solid #f0f0f0;"></div>
<div class="a" style="left:915.5px;top:1180.8px;width:263.5px;height:21.5px;background:#374727;border-radius:4px 4px 0 0;"></div>
<svg class="a" style="left:926px;top:1187.8px;" width="10.5" height="6.300000000000001" viewBox="0 0 10.5 6.300000000000001"><path d="M1 1 L5.25 5.25 L9.450000000000001 1" fill="none" stroke="#e0e0e0" stroke-width="1.3"/></svg>
<div class="t" style="top:1179.0px;font-size:14.0px;color:#e6e6e6;left:942px;">Create Intersection Mesh</div>
<svg class="a" style="left:1150.5px;top:1181.3px;" width="26" height="22" viewBox="0 0 26 22"><rect x="4" y="1.5" width="10" height="7" rx="2.2" fill="#e0e0e0"/><rect x="5.5" y="4.6" width="7" height="1" fill="#555"/><rect x="2" y="11.5" width="10" height="7" rx="2.2" fill="#e0e0e0"/><rect x="3.5" y="14.6" width="7" height="1" fill="#555"/><path d="M15 3.5 Q18 3.5 18 7 L18 12.5 Q18 16 15 16" fill="none" stroke="#ccc" stroke-width="1.2"/><path d="M12.5 16 L15.5 14 L15.5 18 Z" fill="#ccc"/><text x="17" y="21" font-size="11" font-family="Liberation Sans" fill="#e6e6e6">3</text></svg>
<div class="t" style="top:1205.8px;font-size:14.0px;color:#e0e0e0;right:1467px;">Geometry</div>
<div class="t" style="top:1230.5px;font-size:14.0px;color:#e0e0e0;left:926px;">Curve</div>
<div class="a" style="left:926px;top:1256.7px;width:241px;height:21px;background:#545454;border-radius:4px;"></div>
<div class="t" style="top:1255.4px;font-size:14.0px;color:#e0e0e0;left:942px;">Width</div>
<div class="t" style="top:1255.4px;font-size:14.0px;color:#e0e0e0;right:1480px;letter-spacing:0.45px;">0.22 m</div>
<div class="a" style="left:926px;top:1282px;width:241px;height:21px;background:#545454;border-radius:4px;"></div>
<div class="t" style="top:1280.7px;font-size:14.0px;color:#e0e0e0;left:942px;">Height</div>
<div class="t" style="top:1280.7px;font-size:14.0px;color:#e0e0e0;right:1480px;letter-spacing:0.45px;">2 m</div>
<svg class="a" style="left:0px;top:0px;pointer-events:none" width="2634" height="1391" viewBox="0 0 2634 1391"><circle cx="827" cy="1051.5" r="5.5" fill="#00d6a3" stroke="#141414" stroke-width="1"/><path d="M827 1071.6000000000001 L832.6 1077.2 L827 1082.8 L821.4 1077.2 Z" fill="#5f935f"/><circle cx="827" cy="1077.2" r="1.4" fill="#262626"/><path d="M827 1096.8000000000002 L832.6 1102.4 L827 1108.0 L821.4 1102.4 Z" fill="#a8a8a8"/><circle cx="827" cy="1102.4" r="1.4" fill="#262626"/><path d="M827 1123.0 L832.6 1128.6 L827 1134.1999999999998 L821.4 1128.6 Z" fill="#5f935f"/><circle cx="827" cy="1128.6" r="1.4" fill="#262626"/><circle cx="568" cy="1153.5" r="5.5" fill="#00d6a3" stroke="#141414" stroke-width="1"/><path d="M568 1172.4 L573.6 1178 L568 1183.6 L562.4 1178 Z" fill="#5f935f"/><circle cx="568" cy="1178" r="1.4" fill="#262626"/><path d="M568 1197.4 L573.6 1203 L568 1208.6 L562.4 1203 Z" fill="#a8a8a8"/><circle cx="568" cy="1203" r="1.4" fill="#262626"/><path d="M568 1222.4 L573.6 1228 L568 1233.6 L562.4 1228 Z" fill="#5f935f"/><circle cx="568" cy="1228" r="1.4" fill="#262626"/><circle cx="1159.5" cy="1034.3" r="5.5" fill="#00d6a3" stroke="#141414" stroke-width="1"/><circle cx="934" cy="1059.5" r="5.5" fill="#00d6a3" stroke="#141414" stroke-width="1"/><path d="M934 1080.4 L939.6 1086 L934 1091.6 L928.4 1086 Z" fill="#a8a8a8"/><circle cx="934" cy="1086" r="1.4" fill="#262626"/><path d="M934 1105.4 L939.6 1111 L934 1116.6 L928.4 1111 Z" fill="#a8a8a8"/><circle cx="934" cy="1111" r="1.4" fill="#262626"/><path d="M934 1130.9 L939.6 1136.5 L934 1142.1 L928.4 1136.5 Z" fill="#a8a8a8"/><circle cx="934" cy="1136.5" r="1.4" fill="#262626"/><circle cx="1179.5" cy="1217.6" r="5.5" fill="#00d6a3" stroke="#141414" stroke-width="1"/><circle cx="914" cy="1242.3" r="5.5" fill="#00d6a3" stroke="#141414" stroke-width="1"/><circle cx="914" cy="1267" r="5.5" fill="#a1a1a1" stroke="#141414" stroke-width="1"/><circle cx="914" cy="1292.5" r="5.5" fill="#a1a1a1" stroke="#141414" stroke-width="1"/></svg>
<div class="a" style="left:1824px;top:972px;width:315.5px;height:261.5px;background:#3d3d3d;border-radius:6px;"></div>
<svg class="a" style="left:1834.6px;top:984.5px;" width="11.0" height="6.6000000000000005" viewBox="0 0 11.0 6.6000000000000005"><path d="M1 1 L5.5 5.5 L9.9 1" fill="none" stroke="#e0e0e0" stroke-width="1.3"/></svg>
<div class="t" style="top:975.7px;font-size:15.2px;color:#e6e6e6;left:1851.3px;">Group</div>
<svg class="a" style="left:2116px;top:984px;" width="16" height="8" viewBox="0 0 16 8"><rect x="0" y="0" width="2" height="2" fill="#999"/><rect x="0" y="4" width="2" height="2" fill="#999"/><rect x="4" y="0" width="2" height="2" fill="#999"/><rect x="4" y="4" width="2" height="2" fill="#999"/><rect x="8" y="0" width="2" height="2" fill="#999"/><rect x="8" y="4" width="2" height="2" fill="#999"/><rect x="12" y="0" width="2" height="2" fill="#999"/><rect x="12" y="4" width="2" height="2" fill="#999"/></svg>
<div class="t" style="top:1013.5px;font-size:15.2px;color:#c8c8c8;right:687px;">Name</div>
<div class="t" style="top:1044.9px;font-size:15.2px;color:#c8c8c8;right:687px;">Description</div>
<div class="t" style="top:1076.0px;font-size:15.2px;color:#c8c8c8;right:687px;">Color Tag</div>
<div class="t" style="top:1106.5px;font-size:15.2px;color:#c8c8c8;right:687px;">Node Width</div>
<div class="a" style="left:1959px;top:1014px;width:169.5px;height:22.7px;background:#1d1d1d;border-radius:5px;"></div>
<div class="t" style="top:1013.5px;font-size:15.2px;color:#e6e6e6;left:1968px;">Geometry Nodes.001</div>
<div class="a" style="left:1959px;top:1045.4px;width:169.5px;height:22.7px;background:#1d1d1d;border-radius:5px;"></div>
<div class="a" style="left:1959px;top:1076.6px;width:169.5px;height:22.7px;background:#1d1d1d;border-radius:5px;"></div>
<div class="t" style="top:1076.0px;font-size:15.2px;color:#e6e6e6;left:1968px;">None</div>
<svg class="a" style="left:2116px;top:1085px;" width="10" height="6" viewBox="0 0 10 6"><path d="M1 1 L5 5 L9 1" fill="none" stroke="#d0d0d0" stroke-width="1.3"/></svg>
<div class="a" style="left:1959px;top:1107px;width:145px;height:22.7px;background:#545454;border-radius:5px 0 0 5px;"></div>
<div class="a" style="left:2105px;top:1107px;width:23.5px;height:22.7px;background:#4a4a4a;border-radius:0 5px 5px 0;"></div>
<svg class="a" style="left:2108px;top:1109px;" width="18" height="18" viewBox="0 0 18 18"><rect x="2" y="3" width="13" height="12" rx="2" fill="none" stroke="#777" stroke-width="1.3"/><circle cx="14" cy="10" r="2.5" fill="#777"/></svg>
<div class="t" style="top:1106.5px;font-size:15.2px;color:#e6e6e6;left:1992.0px;width:80px;text-align:center;letter-spacing:0.45px;">140</div>
<svg class="a" style="left:1841px;top:1145.5px;" width="11.0" height="6.6000000000000005" viewBox="0 0 11.0 6.6000000000000005"><path d="M1 1 L5.5 5.5 L9.9 1" fill="none" stroke="#e0e0e0" stroke-width="1.3"/></svg>
<div class="t" style="top:1136.8px;font-size:15.2px;color:#e0e0e0;left:1860.6px;">Usage</div>
<div class="a" style="left:1824px;top:1167px;width:315.5px;height:66.5px;background:#363636;border-radius:0 0 6px 6px;"></div>
<div class="a" style="left:1959px;top:1177px;width:17px;height:17px;background:#4772b3;border-radius:3px;"></div>
<svg class="a" style="left:1959px;top:1177px;" width="17" height="17" viewBox="0 0 17 17"><path d="M3.5 8.5 L7 12 L13.5 4.5" fill="none" stroke="#fff" stroke-width="2"/></svg>
<div class="t" style="top:1173.5px;font-size:15.2px;color:#e6e6e6;left:1980px;">Modifier</div>
<div class="a" style="left:1959px;top:1202px;width:17px;height:17px;background:#545454;border-radius:3px;"></div>
<div class="t" style="top:1198.5px;font-size:15.2px;color:#e6e6e6;left:1980px;">Tool</div>
<div class="a" style="left:1824px;top:1235px;width:315.5px;height:95px;background:#3d3d3d;border-radius:6px 6px 0 0;"></div>
<svg class="a" style="left:1834.6px;top:1248px;" width="11.0" height="6.6000000000000005" viewBox="0 0 11.0 6.6000000000000005"><path d="M1 1 L5.5 5.5 L9.9 1" fill="none" stroke="#e0e0e0" stroke-width="1.3"/></svg>
<div class="t" style="top:1239.0px;font-size:15.2px;color:#e6e6e6;left:1851.3px;">Group Sockets</div>
<svg class="a" style="left:2116px;top:1247px;" width="16" height="8" viewBox="0 0 16 8"><rect x="0" y="0" width="2" height="2" fill="#999"/><rect x="0" y="4" width="2" height="2" fill="#999"/><rect x="4" y="0" width="2" height="2" fill="#999"/><rect x="4" y="4" width="2" height="2" fill="#999"/><rect x="8" y="0" width="2" height="2" fill="#999"/><rect x="8" y="4" width="2" height="2" fill="#999"/><rect x="12" y="0" width="2" height="2" fill="#999"/><rect x="12" y="4" width="2" height="2" fill="#999"/></svg>
<div class="a" style="left:1834.6px;top:1276.8px;width:259px;height:50px;background:#2c2c2c;border-radius:5px;"></div>
<div class="a" style="left:1841px;top:1283.7px;width:224px;height:23.3px;background:#4772b3;border-radius:5px;"></div>
<div class="t" style="top:1283.5px;font-size:15.2px;color:#e6e6e6;left:1846.0px;width:150px;text-align:center;">Geometry</div>
<svg class="a" style="left:2040px;top:1289px;" width="13" height="13" viewBox="0 0 13 13"><circle cx="6.5" cy="6.5" r="5.3" fill="#00d6a3" stroke="#1a1a1a" stroke-width="1"/></svg>
<div class="a" style="left:2078px;top:1281px;width:11px;height:35px;background:#242424;border-radius:6px;"></div>
<div class="a" style="left:2079px;top:1282px;width:9px;height:13px;background:#555;border-radius:5px;"></div>
<svg class="a" style="left:1952px;top:1312px;" width="16" height="8" viewBox="0 0 16 8"><rect x="0" y="0" width="2" height="2" fill="#888"/><rect x="0" y="3" width="2" height="2" fill="#888"/><rect x="4" y="0" width="2" height="2" fill="#888"/><rect x="4" y="3" width="2" height="2" fill="#888"/><rect x="8" y="0" width="2" height="2" fill="#888"/><rect x="8" y="3" width="2" height="2" fill="#888"/><rect x="12" y="0" width="2" height="2" fill="#888"/><rect x="12" y="3" width="2" height="2" fill="#888"/></svg>
<div class="a" style="left:2106px;top:1276.8px;width:22.5px;height:22.5px;background:#2a2a2a;border-radius:5px 5px 0 0;"></div>
<div class="a" style="left:2106px;top:1300px;width:22.5px;height:22.5px;background:#4a4a4a;border-radius:0 0 5px 5px;"></div>
<svg class="a" style="left:2106px;top:1276.8px;" width="22" height="22" viewBox="0 0 22 22"><path d="M11 5 L11 17 M5 11 L17 11" stroke="#ddd" stroke-width="1.4"/></svg>
<svg class="a" style="left:2106px;top:1300px;" width="22" height="22" viewBox="0 0 22 22"><path d="M5 11 L17 11" stroke="#ccc" stroke-width="1.4"/></svg>
<div class="a" style="left:2149px;top:971px;width:24px;height:357px;background:#1d1d1d;border-radius:0 0 8px 0;"></div>
<div class="a" style="left:2149px;top:976px;width:22px;height:62px;background:#2a2a2a;border-radius:0 5px 5px 0;box-sizing:border-box;border:1px solid #3a3a3a;border-left:none;"></div>
<div class="t" style="left:2100.6px;top:996.0px;width:120px;text-align:center;transform:rotate(90deg);font-size:15.5px;color:#e0e0e0;line-height:22px">Group</div>
<div class="a" style="left:2149px;top:1043px;width:22px;height:57px;background:#1d1d1d;border-radius:0 5px 5px 0;box-sizing:border-box;border:1px solid #3a3a3a;border-left:none;"></div>
<div class="t" style="left:2100.6px;top:1060.5px;width:120px;text-align:center;transform:rotate(90deg);font-size:15.5px;color:#e0e0e0;line-height:22px">Node</div>
<div class="a" style="left:2149px;top:1106px;width:22px;height:49.5px;background:#1d1d1d;border-radius:0 5px 5px 0;box-sizing:border-box;border:1px solid #3a3a3a;border-left:none;"></div>
<div class="t" style="left:2100.6px;top:1119.75px;width:120px;text-align:center;transform:rotate(90deg);font-size:15.5px;color:#e0e0e0;line-height:22px">Tool</div>
<div class="a" style="left:2149px;top:1161.4px;width:22px;height:52.3px;background:#1d1d1d;border-radius:0 5px 5px 0;box-sizing:border-box;border:1px solid #3a3a3a;border-left:none;"></div>
<div class="t" style="left:2100.6px;top:1176.5500000000002px;width:120px;text-align:center;transform:rotate(90deg);font-size:15.5px;color:#e0e0e0;line-height:22px">View</div>
<div class="a" style="left:2149px;top:1219.6px;width:22px;height:126px;background:#1d1d1d;border-radius:0 5px 5px 0;box-sizing:border-box;border:1px solid #3a3a3a;border-left:none;"></div>
<div class="t" style="left:2100.6px;top:1271.6px;width:120px;text-align:center;transform:rotate(90deg);font-size:15.5px;color:#e0e0e0;line-height:22px">Node Wrangler</div>
<div class="a" style="left:2140px;top:1326px;width:36px;height:5.5px;background:#181818;"></div>
<div class="a" style="left:2px;top:1331.5px;width:2171px;height:30.3px;background:#303030;border-radius:8px;"></div>
<div class="a" style="left:11px;top:1335.5px;width:39px;height:24px;background:#282828;border-radius:5px;box-sizing:border-box;border:1px solid #3a3a3a;"></div>
<svg class="a" style="left:15px;top:1337px;" width="26" height="20" viewBox="0 0 26 20"><path d="M3 18 L9 8 L11 9.5 L5 19 Z" fill="#e0e0e0"/><rect x="11" y="3" width="3" height="15" fill="none" stroke="#e0e0e0" stroke-width="1.3"/><rect x="16" y="7" width="4" height="11" fill="#e0e0e0"/></svg>
<svg class="a" style="left:39px;top:1345px;" width="10" height="6" viewBox="0 0 10 6"><path d="M1 1 L5 5 L9 1" fill="none" stroke="#d0d0d0" stroke-width="1.3"/></svg>
<div class="t" style="top:1334.7px;font-size:15.2px;color:#e5e5e5;left:66px;">View</div>
<div class="t" style="top:1334.7px;font-size:15.2px;color:#e5e5e5;left:118px;">Select</div>
<div class="t" style="top:1334.7px;font-size:15.2px;color:#e5e5e5;left:179px;">Catalog</div>
<div class="t" style="top:1334.7px;font-size:15.2px;color:#e5e5e5;left:251.6px;">Asset</div>
<div class="a" style="left:980px;top:1336px;width:187px;height:23px;background:#282828;border-radius:5px;box-sizing:border-box;border:1px solid #3a3a3a;"></div>
<div class="t" style="top:1335.7px;font-size:15.2px;color:#e6e6e6;left:990px;">Follow Preferences</div>
<svg class="a" style="left:1152px;top:1345px;" width="10" height="6" viewBox="0 0 10 6"><path d="M1 1 L5 5 L9 1" fill="none" stroke="#d0d0d0" stroke-width="1.3"/></svg>
<div class="a" style="left:1842px;top:1335.6px;width:39.4px;height:24.4px;background:#282828;border-radius:5px;box-sizing:border-box;border:1px solid #3a3a3a;"></div>
<svg class="a" style="left:1846px;top:1338px;" width="26" height="20" viewBox="0 0 26 20"><rect x="2" y="2" width="6" height="6" fill="none" stroke="#ddd" stroke-width="1.4"/><rect x="12" y="2" width="6" height="6" fill="none" stroke="#ddd" stroke-width="1.4"/><rect x="2" y="12" width="6" height="6" fill="none" stroke="#ddd" stroke-width="1.4"/><rect x="12" y="12" width="6" height="6" fill="none" stroke="#ddd" stroke-width="1.4"/></svg>
<svg class="a" style="left:1869px;top:1345px;" width="10" height="6" viewBox="0 0 10 6"><path d="M1 1 L5 5 L9 1" fill="none" stroke="#d0d0d0" stroke-width="1.3"/></svg>
<div class="a" style="left:1888px;top:1335.6px;width:199.5px;height:24.4px;background:#1d1d1d;border-radius:5px;box-sizing:border-box;border:1px solid #2a2a2a;"></div>
<svg class="a" style="left:1893px;top:1338px;" width="22" height="20" viewBox="0 0 22 20"><circle cx="12" cy="8" r="5.5" fill="none" stroke="#ddd" stroke-width="1.5"/><path d="M8 12 L3 18" stroke="#ddd" stroke-width="1.6"/></svg>
<div class="t" style="top:1336.0px;font-size:15.2px;color:#8a8a8a;left:1920px;">Search</div>
<div class="a" style="left:2094px;top:1335.6px;width:38.5px;height:24.4px;background:#282828;border-radius:5px;box-sizing:border-box;border:1px solid #3a3a3a;"></div>
<svg class="a" style="left:2098px;top:1338px;" width="22" height="20" viewBox="0 0 22 20"><path d="M2 3 L18 3 L11 11 L11 18 L9 16 L9 11 Z" fill="none" stroke="#ddd" stroke-width="1.4"/></svg>
<svg class="a" style="left:2119px;top:1345px;" width="10" height="6" viewBox="0 0 10 6"><path d="M1 1 L5 5 L9 1" fill="none" stroke="#d0d0d0" stroke-width="1.3"/></svg>
<div class="a" style="left:2140.5px;top:1335.6px;width:23.2px;height:24.4px;background:#545454;border-radius:5px;"></div>
<svg class="a" style="left:2141px;top:1337px;" width="22" height="22" viewBox="0 0 22 22"><circle cx="11" cy="11" r="5.5" fill="none" stroke="#eee" stroke-width="3"/><circle cx="11" cy="11" r="8" fill="none" stroke="#eee" stroke-width="2.5" stroke-dasharray="2.5 1.7"/></svg>
<div class="a" style="left:2213.5px;top:43.6px;width:214px;height:23.7px;background:#242424;border-radius:5px;box-sizing:border-box;border:1px solid #303030;"></div>
<div class="a" style="left:2252px;top:44.6px;width:1px;height:21.7px;background:#303030;"></div>
<div class="a" style="left:2227px;top:0px;width:0px;height:0px;"></div>
<div class="a" style="left:2378px;top:44.6px;width:25px;height:21.7px;background:#4a4a4a;"></div>
<div class="a" style="left:2403px;top:44.6px;width:23.5px;height:21.7px;background:#363636;border-radius:0 4px 4px 0;"></div>
<svg class="a" style="left:2217px;top:45px;" width="34" height="20" viewBox="0 0 34 20"><path d="M8 3 L12 11 Q13 15 9 16 Q5 16 5 12 Z" fill="#e6e6e6"/><circle cx="13" cy="14" r="3.6" fill="none" stroke="#e6e6e6" stroke-width="1.3"/><circle cx="15" cy="5" r="2" fill="#e6e6e6"/><path d="M23 9 L26.5 12.5 L30 9" fill="none" stroke="#ccc" stroke-width="1.2"/></svg>
<div class="t" style="top:43.7px;font-size:15.2px;color:#e6e6e6;left:2262px;">Scene</div>
<svg class="a" style="left:2354px;top:45px;" width="22" height="22" viewBox="0 0 22 22"><path d="M13 2 L20 9 L16 10 L12 14 L12 17 L5 10 L8 10 L12 6 Z" fill="none" stroke="#aaa" stroke-width="1.3"/><path d="M8 14 L3 19" stroke="#aaa" stroke-width="1.3"/></svg>
<svg class="a" style="left:2380px;top:45px;" width="22" height="20" viewBox="0 0 22 20"><rect x="3" y="6" width="11" height="11" rx="1.5" fill="none" stroke="#bbb" stroke-width="1.5"/><path d="M7 6 L7 3 L15 3 L18 6 L18 13 L14 13" fill="none" stroke="#bbb" stroke-width="1.5"/></svg>
<svg class="a" style="left:2404px;top:45px;" width="22" height="20" viewBox="0 0 22 20"><path d="M6 5 L16 15 M16 5 L6 15" stroke="#666" stroke-width="1.3"/></svg>
<div class="a" style="left:2434px;top:43.6px;width:189.5px;height:23.7px;background:#242424;border-radius:5px;box-sizing:border-box;border:1px solid #303030;"></div>
<div class="a" style="left:2473px;top:44.6px;width:1px;height:21.7px;background:#303030;"></div>
<div class="a" style="left:2574px;top:44.6px;width:25px;height:21.7px;background:#4a4a4a;"></div>
<div class="a" style="left:2599px;top:44.6px;width:23.5px;height:21.7px;background:#363636;border-radius:0 4px 4px 0;"></div>
<svg class="a" style="left:2438px;top:45px;" width="34" height="20" viewBox="0 0 34 20"><rect x="6" y="2" width="11" height="11" fill="none" stroke="#ddd" stroke-width="1.3"/><path d="M4 5 L4 15 L14 15 M2 7 L2 17 L12 17" fill="none" stroke="#ccc" stroke-width="1.2"/><path d="M7 12 L10 7 L12 10 L14 8 L16 12 Z" fill="#ddd"/><path d="M22 9 L25.5 12.5 L29 9" fill="none" stroke="#ccc" stroke-width="1.2"/></svg>
<div class="t" style="top:43.7px;font-size:15.2px;color:#e6e6e6;left:2483.5px;">ViewLayer</div>
<svg class="a" style="left:2576px;top:45px;" width="22" height="20" viewBox="0 0 22 20"><rect x="3" y="6" width="11" height="11" rx="1.5" fill="none" stroke="#bbb" stroke-width="1.5"/><path d="M7 6 L7 3 L15 3 L18 6 L18 13 L14 13" fill="none" stroke="#bbb" stroke-width="1.5"/></svg>
<svg class="a" style="left:2600px;top:45px;" width="22" height="20" viewBox="0 0 22 20"><path d="M6 5 L16 15 M16 5 L6 15" stroke="#666" stroke-width="1.3"/></svg>
<div class="a" style="left:2177px;top:72px;width:455px;height:411px;background:#282828;border-radius:8px;"></div>
<div class="a" style="left:2177px;top:72px;width:455px;height:32px;background:#2e2e2e;border-radius:8px 8px 0 0;"></div>
<div class="a" style="left:2177px;top:179.5px;width:455px;height:25px;background:#2b2b2b;"></div>
<div class="a" style="left:2177px;top:229.5px;width:455px;height:25px;background:#2b2b2b;"></div>
<div class="a" style="left:2177px;top:279.5px;width:455px;height:25px;background:#2b2b2b;"></div>
<div class="a" style="left:2177px;top:329.5px;width:455px;height:25px;background:#2b2b2b;"></div>
<div class="a" style="left:2177px;top:379.5px;width:455px;height:25px;background:#2b2b2b;"></div>
<div class="a" style="left:2177px;top:429.5px;width:455px;height:25px;background:#2b2b2b;"></div>
<div class="a" style="left:2187.6px;top:76px;width:39px;height:23.6px;background:#282828;border-radius:5px;box-sizing:border-box;border:1px solid #3a3a3a;"></div>
<svg class="a" style="left:2191px;top:78px;" width="24" height="20" viewBox="0 0 24 20"><rect x="2" y="1" width="6" height="3.5" fill="#ddd"/><rect x="8" y="8" width="7" height="3.5" fill="#ddd"/><rect x="8" y="14" width="7" height="3.5" fill="#ddd"/><path d="M4 4.5 L4 16 L8 16 M4 10 L8 10" fill="none" stroke="#ccc" stroke-width="1.2"/></svg>
<svg class="a" style="left:2216px;top:86px;" width="10" height="6" viewBox="0 0 10 6"><path d="M1 1 L5 5 L9 1" fill="none" stroke="#d0d0d0" stroke-width="1.3"/></svg>
<div class="a" style="left:2233px;top:76px;width:39.7px;height:23.6px;background:#282828;border-radius:5px;box-sizing:border-box;border:1px solid #3a3a3a;"></div>
<svg class="a" style="left:2237px;top:78px;" width="24" height="20" viewBox="0 0 24 20"><rect x="6" y="2" width="11" height="11" fill="none" stroke="#ddd" stroke-width="1.3"/><path d="M4 5 L4 15 L14 15 M2 7 L2 17 L12 17" fill="none" stroke="#ccc" stroke-width="1.2"/><path d="M7 12 L10 7 L12 10 L14 8 L16 12 Z" fill="#ddd"/></svg>
<svg class="a" style="left:2261px;top:86px;" width="10" height="6" viewBox="0 0 10 6"><path d="M1 1 L5 5 L9 1" fill="none" stroke="#d0d0d0" stroke-width="1.3"/></svg>
<div class="a" style="left:2316px;top:76px;width:149.6px;height:23.6px;background:#1d1d1d;border-radius:5px;box-sizing:border-box;border:1px solid #303030;"></div>
<svg class="a" style="left:2322px;top:78px;" width="22" height="20" viewBox="0 0 22 20"><circle cx="12" cy="8" r="5.5" fill="none" stroke="#ddd" stroke-width="1.5"/><path d="M8 12 L3 18" stroke="#ddd" stroke-width="1.6"/></svg>
<div class="t" style="top:75.7px;font-size:15.2px;color:#8a8a8a;left:2349px;">Search</div>
<div class="a" style="left:2552px;top:76px;width:39.6px;height:23.6px;background:#282828;border-radius:5px;box-sizing:border-box;border:1px solid #3a3a3a;"></div>
<svg class="a" style="left:2556px;top:78px;" width="22" height="20" viewBox="0 0 22 20"><path d="M2 3 L18 3 L11 11 L11 18 L9 16 L9 11 Z" fill="none" stroke="#ddd" stroke-width="1.4"/></svg>
<svg class="a" style="left:2579px;top:86px;" width="10" height="6" viewBox="0 0 10 6"><path d="M1 1 L5 5 L9 1" fill="none" stroke="#d0d0d0" stroke-width="1.3"/></svg>
<div class="a" style="left:2598px;top:76px;width:24.6px;height:23.6px;background:#3d3d3d;border-radius:5px;"></div>
<svg class="a" style="left:2600px;top:78px;" width="22" height="20" viewBox="0 0 22 20"><rect x="3" y="8" width="14" height="10" fill="none" stroke="#aaa" stroke-width="1.3"/><rect x="2" y="5" width="7" height="3" fill="#aaa"/><circle cx="16" cy="5" r="4" fill="#ddd"/><path d="M16 3 L16 7 M14 5 L18 5" stroke="#282828" stroke-width="1.2"/></svg>
<svg class="a" style="left:2205px;top:106px;" width="22" height="22" viewBox="0 0 22 22"><rect x="2" y="3" width="17" height="4" rx="1" fill="#e6e6e6"/><rect x="3" y="8" width="15" height="11" rx="1" fill="#e6e6e6"/><rect x="8" y="10" width="5" height="2" fill="#282828"/></svg>
<div class="t" style="top:106.2px;font-size:15.2px;color:#e6e6e6;left:2232px;">Scene Collection</div>
<div class="a" style="left:2177px;top:129.5px;width:455px;height:25px;background:#2b2b2b;"></div>
<svg class="a" style="left:2207px;top:136px;" width="14" height="10" viewBox="0 0 14 10"><path d="M1.5 2 L7 7.5 L12.5 2" fill="none" stroke="#ccc" stroke-width="1.4"/></svg>
<div class="a" style="left:2227px;top:130.5px;width:24.5px;height:23.5px;background:#3a3a3a;border-radius:5px;box-sizing:border-box;border:1px solid #444;"></div>
<svg class="a" style="left:2229px;top:132px;" width="22" height="22" viewBox="0 0 22 22"><rect x="2.5" y="3" width="15" height="4" rx="1" fill="#e6e6e6"/><rect x="3.5" y="8" width="13" height="10" rx="1" fill="#e6e6e6"/><rect x="8" y="10" width="4" height="2" fill="#3a3a3a"/></svg>
<div class="t" style="top:130.2px;font-size:15.2px;color:#e6e6e6;left:2257.5px;">Collection</div>
<div class="a" style="left:2551px;top:134.5px;width:14px;height:14px;background:#e6e6e6;border-radius:2px;"></div>
<svg class="a" style="left:2551px;top:134.5px;" width="14" height="14" viewBox="0 0 14 14"><path d="M3 7 L6 10 L11.5 3.5" fill="none" stroke="#282828" stroke-width="2"/></svg>
<svg class="a" style="left:2573.5px;top:135px;" width="20" height="14" viewBox="0 0 20 14"><path d="M1.5 7 Q10 -2 18.5 7 Q10 16 1.5 7 Z" fill="none" stroke="#e6e6e6" stroke-width="1.6"/><circle cx="10" cy="7" r="2.8" fill="#e6e6e6"/></svg>
<svg class="a" style="left:2599px;top:134px;" width="20" height="16" viewBox="0 0 20 16"><path d="M2 4 L6 4 L8 1.5 L13 1.5 L15 4 L18 4 L18 15 L2 15 Z" fill="#e6e6e6"/><circle cx="10" cy="9" r="3.8" fill="none" stroke="#282828" stroke-width="1.5"/></svg>
<div class="a" style="left:2177px;top:154px;width:455px;height:25px;background:#334d80;"></div>
<svg class="a" style="left:2181px;top:155px;" width="22" height="22" viewBox="0 0 22 22"><rect x="2" y="4" width="3.5" height="3.5" fill="none" stroke="#aaa" stroke-width="1.1"/><rect x="2" y="16" width="3.5" height="3.5" fill="none" stroke="#aaa" stroke-width="1.1"/><rect x="15" y="16" width="3.5" height="3.5" fill="none" stroke="#aaa" stroke-width="1.1"/><rect x="14.5" y="2" width="5" height="5" fill="#eee"/><path d="M5.5 5.5 L14.5 5.5 M3.7 7.5 L3.7 16 M5.5 18 L15 18 M16.8 7 L16.8 16" stroke="#aaa" stroke-width="1.1"/></svg>
<svg class="a" style="left:2233px;top:161px;" width="12" height="12" viewBox="0 0 12 12"><path d="M3 1.5 L8.5 6 L3 10.5" fill="none" stroke="#ddd" stroke-width="1.4"/></svg>
<div class="a" style="left:2252px;top:155.5px;width:24.5px;height:23px;background:#4a5f8a;border-radius:5px;box-sizing:border-box;border:1px solid #5b70a0;"></div>
<svg class="a" style="left:2253px;top:156px;" width="22" height="22" viewBox="0 0 22 22"><path d="M6 4 Q17 3 17 11 Q17 19 6 18" fill="none" stroke="#e3955a" stroke-width="3.2" stroke-linecap="round"/></svg>
<div class="t" style="top:155.2px;font-size:15.2px;color:#ffaf29;left:2282.5px;">BézierCurve</div>
<svg class="a" style="left:2390px;top:157px;" width="22" height="20" viewBox="0 0 22 20"><path d="M3 17 L10 10 M10 10 Q8 4 13 2 L12 6 L15 8 L18 6 Q18 12 12 12 Z" fill="none" stroke="#6a9be8" stroke-width="1.6"/></svg>
<div class="a" style="left:2412px;top:155.5px;width:24.5px;height:23px;background:#2b5c66;border-radius:5px;"></div>
<svg class="a" style="left:2413px;top:156px;" width="22" height="22" viewBox="0 0 22 22"><path d="M8 5 Q17 3 17 11 Q17 19 7 18" fill="none" stroke="#10c0a0" stroke-width="1.6"/><circle cx="8" cy="5" r="2" fill="none" stroke="#10c0a0" stroke-width="1.4"/><circle cx="7" cy="18" r="2" fill="none" stroke="#10c0a0" stroke-width="1.4"/></svg>
<svg class="a" style="left:2573.5px;top:160px;" width="20" height="14" viewBox="0 0 20 14"><path d="M1.5 7 Q10 -2 18.5 7 Q10 16 1.5 7 Z" fill="none" stroke="#e6e6e6" stroke-width="1.6"/><circle cx="10" cy="7" r="2.8" fill="#e6e6e6"/></svg>
<svg class="a" style="left:2599px;top:159px;" width="20" height="16" viewBox="0 0 20 16"><path d="M2 4 L6 4 L8 1.5 L13 1.5 L15 4 L18 4 L18 15 L2 15 Z" fill="#e6e6e6"/><circle cx="10" cy="9" r="3.8" fill="none" stroke="#282828" stroke-width="1.5"/></svg>
<div class="a" style="left:2177px;top:179px;width:455px;height:25px;background:#1f2d48;"></div>
<div class="a" style="left:2177px;top:204px;width:455px;height:25px;background:#1f2d48;"></div>
<svg class="a" style="left:2233px;top:186px;" width="12" height="12" viewBox="0 0 12 12"><path d="M3 1.5 L8.5 6 L3 10.5" fill="none" stroke="#ddd" stroke-width="1.4"/></svg>
<svg class="a" style="left:2253px;top:181px;" width="22" height="22" viewBox="0 0 22 22"><circle cx="7" cy="6" r="4" fill="#e3955a"/><circle cx="14" cy="5" r="3.5" fill="#e3955a"/><rect x="4" y="10" width="12" height="8" fill="#e3955a"/><path d="M16 14 L20 11 L20 18 Z" fill="#e3955a"/><path d="M1 12 L4 12" stroke="#e3955a" stroke-width="1.5"/></svg>
<div class="t" style="top:179.7px;font-size:15.2px;color:#e9821e;left:2282.5px;">Camera</div>
<div class="a" style="left:2358px;top:180.5px;width:24.5px;height:23px;background:#2a4a55;border-radius:5px;"></div>
<svg class="a" style="left:2359px;top:181px;" width="22" height="22" viewBox="0 0 22 22"><circle cx="8" cy="6" r="4" fill="none" stroke="#10c0a0" stroke-width="1.4"/><circle cx="14.5" cy="5.5" r="3" fill="none" stroke="#10c0a0" stroke-width="1.4"/><rect x="5" y="11" width="10" height="7" fill="none" stroke="#10c0a0" stroke-width="1.4"/><path d="M15 14 L19 11.5 L19 18 Z" fill="none" stroke="#10c0a0" stroke-width="1.3"/></svg>
<svg class="a" style="left:2573.5px;top:185px;" width="20" height="14" viewBox="0 0 20 14"><path d="M1.5 7 Q10 -2 18.5 7 Q10 16 1.5 7 Z" fill="none" stroke="#e6e6e6" stroke-width="1.6"/><circle cx="10" cy="7" r="2.8" fill="#e6e6e6"/></svg>
<svg class="a" style="left:2599px;top:184px;" width="20" height="16" viewBox="0 0 20 16"><path d="M2 4 L6 4 L8 1.5 L13 1.5 L15 4 L18 4 L18 15 L2 15 Z" fill="#e6e6e6"/><circle cx="10" cy="9" r="3.8" fill="none" stroke="#282828" stroke-width="1.5"/></svg>
<svg class="a" style="left:2233px;top:211px;" width="12" height="12" viewBox="0 0 12 12"><path d="M3 1.5 L8.5 6 L3 10.5" fill="none" stroke="#ddd" stroke-width="1.4"/></svg>
<svg class="a" style="left:2253px;top:205px;" width="22" height="24" viewBox="0 0 22 24"><circle cx="11" cy="9" r="7.5" fill="#e3955a"/><rect x="7" y="16" width="8" height="3" fill="#e3955a"/><rect x="8" y="20" width="6" height="2" fill="#e3955a"/><path d="M8 10 L9 7 L11 9 L13 7 L14 10" fill="none" stroke="#6a3d1a" stroke-width="1.2"/></svg>
<div class="t" style="top:204.7px;font-size:15.2px;color:#e9821e;left:2282.5px;">Light</div>
<svg class="a" style="left:2341px;top:204px;" width="22" height="24" viewBox="0 0 22 24"><circle cx="11" cy="10" r="8" fill="none" stroke="#10c0a0" stroke-width="1.4"/><circle cx="11" cy="10" r="1.6" fill="#10c0a0"/><path d="M11 12 L11 22" stroke="#10c0a0" stroke-width="1.3" stroke-dasharray="2 1.5"/></svg>
<svg class="a" style="left:2573.5px;top:210px;" width="20" height="14" viewBox="0 0 20 14"><path d="M1.5 7 Q10 -2 18.5 7 Q10 16 1.5 7 Z" fill="none" stroke="#e6e6e6" stroke-width="1.6"/><circle cx="10" cy="7" r="2.8" fill="#e6e6e6"/></svg>
<svg class="a" style="left:2599px;top:209px;" width="20" height="16" viewBox="0 0 20 16"><path d="M2 4 L6 4 L8 1.5 L13 1.5 L15 4 L18 4 L18 15 L2 15 Z" fill="#e6e6e6"/><circle cx="10" cy="9" r="3.8" fill="none" stroke="#282828" stroke-width="1.5"/></svg>
<div class="a" style="left:2213px;top:160px;width:1.2px;height:64px;background:#9a8a6a;"></div>
<div class="a" style="left:2177px;top:487px;width:455px;height:875px;background:#303030;border-radius:8px;"></div>
<div class="a" style="left:2187.6px;top:489.4px;width:39px;height:24.3px;background:#282828;border-radius:5px;box-sizing:border-box;border:1px solid #3a3a3a;"></div>
<svg class="a" style="left:2191px;top:491px;" width="24" height="20" viewBox="0 0 24 20"><rect x="2" y="2" width="15" height="6" rx="3" fill="#e6e6e6"/><rect x="8" y="3.5" width="7" height="3" fill="#282828"/><rect x="2" y="11" width="15" height="6" rx="3" fill="#e6e6e6"/><rect x="12" y="12.5" width="3" height="3" fill="#282828"/></svg>
<svg class="a" style="left:2216px;top:499px;" width="10" height="6" viewBox="0 0 10 6"><path d="M1 1 L5 5 L9 1" fill="none" stroke="#d0d0d0" stroke-width="1.3"/></svg>
<div class="a" style="left:2332px;top:489.4px;width:148.4px;height:24.3px;background:#1d1d1d;border-radius:5px;box-sizing:border-box;border:1px solid #303030;"></div>
<svg class="a" style="left:2338px;top:491px;" width="22" height="20" viewBox="0 0 22 20"><circle cx="12" cy="8" r="5.5" fill="none" stroke="#ddd" stroke-width="1.5"/><path d="M8 12 L3 18" stroke="#ddd" stroke-width="1.6"/></svg>
<div class="t" style="top:489.7px;font-size:15.2px;color:#8a8a8a;left:2364px;">Search</div>
<div class="a" style="left:2598px;top:489.4px;width:24.6px;height:24.3px;background:#282828;border-radius:5px;box-sizing:border-box;border:1px solid #3a3a3a;"></div>
<svg class="a" style="left:2605.5px;top:499px;" width="10" height="6" viewBox="0 0 10 6"><path d="M1 1 L5 5 L9 1" fill="none" stroke="#d0d0d0" stroke-width="1.3"/></svg>
<div class="a" style="left:2178px;top:517.3px;width:36.3px;height:844px;background:#1d1d1d;border-radius:0 0 0 8px;"></div>
<div class="a" style="left:2181.5px;top:835px;width:33px;height:32.6px;background:#303030;border-radius:5px 0 0 5px;"></div>
<svg class="a" style="left:2187px;top:534px;" width="20" height="20" viewBox="0 0 20 20"><path d="M5 4 L5 11 M4 12 Q3 17 5 17 Q8 17 7 12 Z" stroke="#ddd" stroke-width="1.5" fill="#ddd"/><path d="M13 17 L13 8 M10 3 Q10 8 13 8 Q16 8 16 3" fill="none" stroke="#ddd" stroke-width="2"/></svg>
<svg class="a" style="left:2187px;top:577.7px;" width="20" height="20" viewBox="0 0 20 20"><path d="M3 7 L17 7 L17 17 L3 17 Z" fill="none" stroke="#ddd" stroke-width="1.7"/><path d="M6 7 L6 4 L11 4 L11 7" fill="none" stroke="#ddd" stroke-width="1.5"/><path d="M5 10 L12 10 M5 13 L12 13" stroke="#ddd" stroke-width="1.3"/><circle cx="15" cy="11" r="1" fill="#ddd"/></svg>
<svg class="a" style="left:2187px;top:612.8px;" width="20" height="20" viewBox="0 0 20 20"><rect x="3" y="2" width="14" height="5" rx="1" fill="#ddd"/><rect x="2" y="7" width="16" height="4" fill="#ddd"/><path d="M5 11 L5 18 L15 18 L15 11" fill="none" stroke="#ddd" stroke-width="1.7"/><path d="M7 16 L10 12 L13 16 Z" fill="#ddd"/></svg>
<svg class="a" style="left:2187px;top:648px;" width="20" height="20" viewBox="0 0 20 20"><rect x="6" y="2" width="11" height="11" fill="none" stroke="#ddd" stroke-width="1.3"/><path d="M4 5 L4 15 L14 15 M2 7 L2 17 L12 17" fill="none" stroke="#bbb" stroke-width="1.2"/><path d="M7 12 L10 7 L12 10 L14 8 L16 12 Z" fill="#ddd"/></svg>
<svg class="a" style="left:2187px;top:682px;" width="20" height="20" viewBox="0 0 20 20"><path d="M7 3 L11 11 Q12 15 8 16 Q4 16 4 12 Z" fill="#ddd"/><circle cx="13" cy="14" r="3.6" fill="none" stroke="#ddd" stroke-width="1.3"/><circle cx="15" cy="5" r="2" fill="#ddd"/></svg>
<svg class="a" style="left:2187px;top:718.4px;" width="20" height="20" viewBox="0 0 20 20"><circle cx="10" cy="10" r="7.5" fill="none" stroke="#c0525a" stroke-width="1.6"/><path d="M5 6 Q8 5 9 8 Q8 11 10 13 L9 16 Q5 14 4 10 Z M12 4 Q15 6 16 9 L13 9 Z" fill="#c0525a"/><path d="M2 18 L18 2" stroke="#c0525a" stroke-width="1.2"/></svg>
<svg class="a" style="left:2187px;top:760.8px;" width="20" height="20" viewBox="0 0 20 20"><rect x="2.5" y="3" width="15" height="4" rx="0.5" fill="none" stroke="#ddd" stroke-width="1.5"/><rect x="3.5" y="7" width="13" height="11" fill="none" stroke="#ddd" stroke-width="1.5"/><rect x="8" y="9.5" width="4" height="1.6" fill="#ddd"/></svg>
<svg class="a" style="left:2187px;top:806px;" width="20" height="20" viewBox="0 0 20 20"><path d="M2 6 L2 2 L6 2 M14 2 L18 2 L18 6 M18 14 L18 18 L14 18 M6 18 L2 18 L2 14" fill="none" stroke="#9a6a40" stroke-width="1.4"/><rect x="5" y="5" width="10" height="10" fill="#d9955a"/></svg>
<svg class="a" style="left:2187px;top:841px;" width="20" height="20" viewBox="0 0 20 20"><path d="M4 17 L11 10" stroke="#6a9be8" stroke-width="3" stroke-linecap="round"/><path d="M9 9 Q8 3 14 2.5 L12 6 L14.5 8 L17.5 6 Q18 12 11 12 Z" fill="#6a9be8" stroke="#6a9be8" stroke-width="1.5" stroke-linejoin="round"/></svg>
<svg class="a" style="left:2187px;top:876.5px;" width="20" height="20" viewBox="0 0 20 20"><path d="M15 6 A7 7 0 1 0 16 15" fill="none" stroke="#5a86d0" stroke-width="1.3"/><circle cx="9" cy="11" r="3.3" fill="#6a9be8"/><circle cx="16.5" cy="4" r="2.3" fill="#6a9be8"/></svg>
<svg class="a" style="left:2187px;top:911.6px;" width="20" height="20" viewBox="0 0 20 20"><path d="M17 2 L15 10 A6.5 6.5 0 1 1 10 5 Z" fill="none" stroke="#6a9be8" stroke-width="1.6" stroke-linejoin="round"/><circle cx="9.5" cy="12" r="2.6" fill="none" stroke="#6a9be8" stroke-width="1.5"/></svg>
<svg class="a" style="left:2187px;top:946px;" width="20" height="20" viewBox="0 0 20 20"><path d="M7 4 Q17 3 17 10 Q17 17 6 16" fill="none" stroke="#10c090" stroke-width="1.6"/><rect x="4.5" y="2" width="4" height="4" fill="none" stroke="#10c090" stroke-width="1.4"/><rect x="2.5" y="14" width="4" height="4" fill="none" stroke="#10c090" stroke-width="1.4"/></svg>
<svg class="a" style="left:2187px;top:981px;" width="20" height="20" viewBox="0 0 20 20"><circle cx="10" cy="10" r="7.5" fill="#b85c66"/><path d="M10 2.5 A7.5 7.5 0 0 1 17.5 10 L10 10 Z" fill="#e0a0a8"/><path d="M10 10 L10 17.5 M2.5 10 L10 10" stroke="#1d1d1d" stroke-width="1.3"/><circle cx="10" cy="10" r="7.5" fill="none" stroke="#c05560" stroke-width="1"/></svg>
<svg class="a" style="left:2226px;top:529px;" width="20" height="20" viewBox="0 0 20 20"><path d="M1 5 L1 1 L5 1 M15 1 L19 1 L19 5 M19 15 L19 19 L15 19 M5 19 L1 19 L1 15" fill="none" stroke="#bbb" stroke-width="1.5"/><rect x="5" y="5" width="10" height="10" fill="#e6e6e6"/></svg>
<div class="t" style="top:527.2px;font-size:15.2px;color:#e6e6e6;left:2257px;">BézierCurve</div>
<svg class="a" style="left:2354px;top:531px;" width="12" height="16" viewBox="0 0 12 16"><path d="M2 2 L9 8 L2 14" fill="none" stroke="#ccc" stroke-width="1.4"/></svg>
<svg class="a" style="left:2375px;top:529px;" width="22" height="22" viewBox="0 0 22 22"><circle cx="4" cy="4" r="2.2" fill="#aaa"/><circle cx="9" cy="5" r="2" fill="#aaa"/><circle cx="6.5" cy="11" r="3" fill="#ccc"/><circle cx="13" cy="14" r="4.2" fill="#e8e8e8"/></svg>
<div class="t" style="top:527.2px;font-size:15.2px;color:#e6e6e6;left:2406.4px;">GeometryNodes</div>
<svg class="a" style="left:2598px;top:528px;" width="24" height="24" viewBox="0 0 24 24"><path d="M13 2 L20 9 L16 10 L12 14 L12 17 L5 10 L8 10 L12 6 Z" fill="none" stroke="#aaa" stroke-width="1.3"/><path d="M8 14 L3 19" stroke="#aaa" stroke-width="1.3"/></svg>
<div class="a" style="left:2224.7px;top:573px;width:397px;height:23px;background:#4a4a4a;border-radius:5px;"></div>
<svg class="a" style="left:2232px;top:575px;" width="18" height="18" viewBox="0 0 18 18"><path d="M9 3 L9 15 M3 9 L15 9" stroke="#e0e0e0" stroke-width="1.4"/></svg>
<div class="t" style="top:572.7px;font-size:15.2px;color:#e6e6e6;left:2334.3px;width:200px;text-align:center;">Add Modifier</div>
<div class="a" style="left:2224.7px;top:609.5px;width:398px;height:177px;background:#3d3d3d;border-radius:6px;box-sizing:border-box;border:1.5px solid #4772b3;"></div>
<svg class="a" style="left:2234px;top:621px;" width="12.0" height="7.199999999999999" viewBox="0 0 12.0 7.199999999999999"><path d="M1 1 L6.0 6.0 L10.799999999999999 1" fill="none" stroke="#ccc" stroke-width="1.3"/></svg>
<svg class="a" style="left:2252px;top:615px;" width="22" height="22" viewBox="0 0 22 22"><circle cx="4" cy="4" r="2.2" fill="#aaa"/><circle cx="9" cy="5" r="2" fill="#aaa"/><circle cx="6.5" cy="11" r="3" fill="#ccc"/><circle cx="13" cy="14" r="4.2" fill="#e8e8e8"/></svg>
<div class="a" style="left:2285px;top:614px;width:275px;height:23.5px;background:#1d1d1d;border-radius:5px;"></div>
<div class="a" style="left:2460.5px;top:614px;width:74.5px;height:23.5px;background:#4772b3;"></div>
<div class="a" style="left:2485.3px;top:614px;width:1px;height:23.5px;background:#3d5f94;"></div>
<div class="a" style="left:2510.2px;top:614px;width:1px;height:23.5px;background:#3d5f94;"></div>
<div class="t" style="top:613.7px;font-size:15.2px;color:#e6e6e6;left:2294px;">GeometryNodes</div>
<svg class="a" style="left:2462px;top:615px;" width="22" height="22" viewBox="0 0 22 22"><rect x="2" y="4" width="3.5" height="3.5" fill="none" stroke="#ddd" stroke-width="1.1"/><rect x="2" y="16" width="3.5" height="3.5" fill="none" stroke="#ddd" stroke-width="1.1"/><rect x="15" y="16" width="3.5" height="3.5" fill="none" stroke="#ddd" stroke-width="1.1"/><rect x="14.5" y="2" width="5" height="5" fill="#fff"/><path d="M5.5 5.5 L14.5 5.5 M3.7 7.5 L3.7 16 M5.5 18 L15 18 M16.8 7 L16.8 16" stroke="#ddd" stroke-width="1.1"/></svg>
<svg class="a" style="left:2487px;top:615px;" width="22" height="22" viewBox="0 0 22 22"><rect x="3" y="4" width="16" height="10" rx="1" fill="none" stroke="#fff" stroke-width="1.6"/><rect x="5" y="6" width="12" height="6" fill="#fff"/><path d="M11 14 L11 17 M7 18 L15 18" stroke="#fff" stroke-width="1.6"/></svg>
<svg class="a" style="left:2511px;top:615px;" width="22" height="22" viewBox="0 0 22 22"><path d="M2 6 L6 6 L8 3 L14 3 L16 6 L20 6 L20 18 L2 18 Z" fill="#fff"/><circle cx="11" cy="12" r="4" fill="none" stroke="#4772b3" stroke-width="1.8"/></svg>
<svg class="a" style="left:2540px;top:620px;" width="14" height="10" viewBox="0 0 14 10"><path d="M1.5 2 L7 7.5 L12.5 2" fill="none" stroke="#ddd" stroke-width="1.5"/></svg>
<svg class="a" style="left:2566px;top:619px;" width="14" height="14" viewBox="0 0 14 14"><path d="M2 2 L12 12 M12 2 L2 12" stroke="#ddd" stroke-width="1.5"/></svg>
<svg class="a" style="left:2599px;top:622px;" width="16" height="8" viewBox="0 0 16 8"><rect x="0" y="0" width="2" height="2" fill="#aaa"/><rect x="0" y="4" width="2" height="2" fill="#aaa"/><rect x="4" y="0" width="2" height="2" fill="#aaa"/><rect x="4" y="4" width="2" height="2" fill="#aaa"/><rect x="8" y="0" width="2" height="2" fill="#aaa"/><rect x="8" y="4" width="2" height="2" fill="#aaa"/><rect x="12" y="0" width="2" height="2" fill="#aaa"/><rect x="12" y="4" width="2" height="2" fill="#aaa"/></svg>
<div class="a" style="left:2235px;top:650.7px;width:39px;height:23px;background:#282828;border-radius:5px;box-sizing:border-box;border:1px solid #303030;"></div>
<svg class="a" style="left:2238px;top:652px;" width="26" height="20" viewBox="0 0 26 20"><rect x="4" y="1.5" width="10" height="7" rx="2.2" fill="#e0e0e0"/><rect x="5.5" y="4.6" width="7" height="1" fill="#555"/><rect x="2" y="11.5" width="10" height="7" rx="2.2" fill="#e0e0e0"/><rect x="3.5" y="14.6" width="7" height="1" fill="#555"/><path d="M15 3.5 Q18 3.5 18 7 L18 12.5 Q18 16 15 16" fill="none" stroke="#ccc" stroke-width="1.2"/><path d="M12.5 16 L15.5 14 L15.5 18 Z" fill="#ccc"/></svg>
<svg class="a" style="left:2261px;top:660px;" width="10" height="6" viewBox="0 0 10 6"><path d="M1 1 L5 5 L9 1" fill="none" stroke="#d0d0d0" stroke-width="1.3"/></svg>
<div class="a" style="left:2273.7px;top:650.7px;width:264px;height:23px;background:#1d1d1d;"></div>
<div class="a" style="left:2537.4px;top:650.7px;width:75px;height:23px;background:#4a4a4a;border-radius:0 5px 5px 0;"></div>
<div class="t" style="top:650.5px;font-size:15.2px;color:#e6e6e6;left:2283px;">Geometry Nodes.001</div>
<svg class="a" style="left:2538px;top:652px;" width="24" height="20" viewBox="0 0 24 20"><path d="M12 3 L18 5 L18 10 Q18 15 12 18 Q6 15 6 10 L6 5 Z" fill="none" stroke="#999" stroke-width="1.3"/></svg>
<svg class="a" style="left:2563px;top:652px;" width="24" height="20" viewBox="0 0 24 20"><rect x="4" y="7" width="10" height="10" fill="none" stroke="#bbb" stroke-width="1.3"/><path d="M8 7 L8 3 L15 3 L18 6 L18 13 L14 13" fill="none" stroke="#bbb" stroke-width="1.3"/></svg>
<svg class="a" style="left:2588px;top:652px;" width="24" height="20" viewBox="0 0 24 20"><path d="M7 5 L17 15 M17 5 L7 15" stroke="#ccc" stroke-width="1.4"/></svg>
<div class="a" style="left:2226.2px;top:681px;width:395px;height:30px;background:#3d3d3d;"></div>
<div class="a" style="left:2226.2px;top:711px;width:395px;height:74px;background:#363636;border-radius:0 0 5px 5px;"></div>
<svg class="a" style="left:2241px;top:690px;" width="11.0" height="6.6000000000000005" viewBox="0 0 11.0 6.6000000000000005"><path d="M1 1 L5.5 5.5 L9.9 1" fill="none" stroke="#ccc" stroke-width="1.3"/></svg>
<div class="t" style="top:680.9px;font-size:15.2px;color:#e6e6e6;left:2260.4px;">Manage</div>
<svg class="a" style="left:2241px;top:722px;" width="10" height="14" viewBox="0 0 10 14"><path d="M2 2 L7 7 L2 12" fill="none" stroke="#ccc" stroke-width="1.4"/></svg>
<div class="t" style="top:717.2px;font-size:15.2px;color:#e6e6e6;left:2260.4px;">Bake</div>
<svg class="a" style="left:2241px;top:752px;" width="10" height="14" viewBox="0 0 10 14"><path d="M2 2 L7 7 L2 12" fill="none" stroke="#ccc" stroke-width="1.4"/></svg>
<div class="t" style="top:746.9px;font-size:15.2px;color:#e6e6e6;left:2260.4px;">Named Attributes</div>
</body></html>
